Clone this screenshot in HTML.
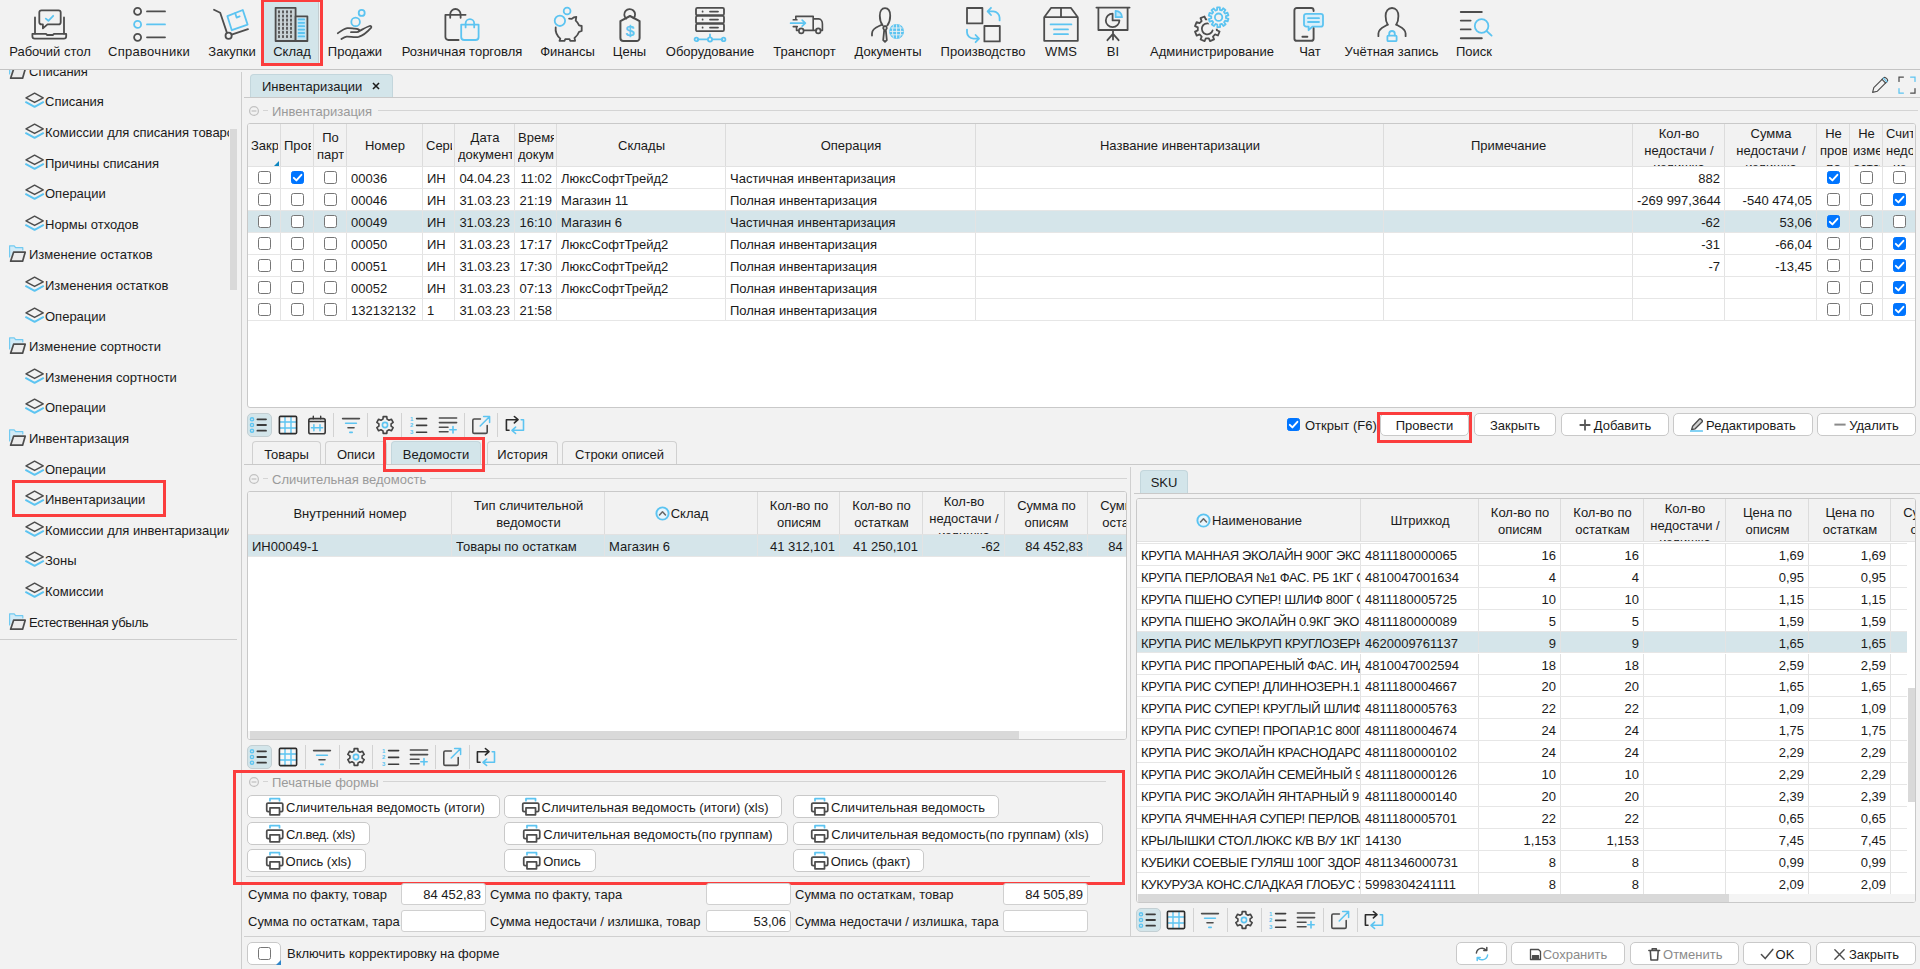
<!DOCTYPE html>
<html lang="ru"><head><meta charset="utf-8"><title>Инвентаризации</title>
<style>
*{box-sizing:border-box;margin:0;padding:0}
html,body{width:1920px;height:969px;overflow:hidden;background:#f2f2f2}
body{font-family:"Liberation Sans",sans-serif;font-size:13px;color:#1a1a1a;position:relative}
.abs{position:absolute}
.hl{position:absolute;height:1px;background:#cdcdcd}
.vl{position:absolute;width:1px;background:#cdcdcd}
#top{position:absolute;left:0;top:0;width:1920px;height:70px;border-bottom:1px solid #c4c4c4}
.ti{position:absolute;top:0;height:66px;text-align:center;white-space:nowrap}
.ti svg{position:absolute;top:6px;left:50%;margin-left:-18px;width:36px;height:36px;overflow:visible}
.ti span{position:absolute;top:44px;left:-60px;right:-60px;line-height:16px;text-align:center}
.red{position:absolute;border:3px solid #fb3d3d;pointer-events:none}
#side{position:absolute;left:0;top:70px;width:241px;height:899px;overflow:hidden}
.tr{position:absolute;left:0;height:30px;line-height:30px;white-space:nowrap;overflow:hidden;width:229px}
.tr svg{position:absolute;top:5px;width:19px;height:18px;overflow:visible}
.tr.l1 svg{left:8px}.tr.l1 span{position:absolute;left:29px}
.tr.l2 svg{left:25px}.tr.l2 span{position:absolute;left:45px}
.grid{position:absolute;border:1px solid #c9c9c9;border-radius:3px;background:#fff;overflow:hidden}
.gh{position:absolute;left:0;top:0;right:0;background:#f2f2f2;border-bottom:1px solid #e2e2e2}
.hc{position:absolute;top:0;bottom:0;border-right:1px solid #dcdcdc;overflow:hidden;text-align:center;line-height:17px;white-space:nowrap}
.hc div{position:absolute;left:3px;right:2px;overflow:hidden}
.row{position:absolute;left:0;right:0;height:22px;border-bottom:1px solid #e6e6e6}
.row.sel{background:#d5e5ea}
.c{position:absolute;top:0;height:21px;line-height:23px;border-right:1px solid #e3e3e3;overflow:hidden;white-space:nowrap;padding:0 0 0 4px}
.c i{display:block;font-style:normal;overflow:hidden;white-space:nowrap;height:21px}
.c.r{text-align:right}
.c.r i{padding-right:4px}
.cb{position:absolute;width:13px;height:13px;border:1px solid #767676;border-radius:2.5px;background:#fff}
.cb.on{background:#0075ff;border-color:#0075ff}
.cb.on svg{position:absolute;left:-1px;top:-1px;width:13px;height:13px}
.btn{position:absolute;height:23px;line-height:23px;border:1px solid #c9c9c9;border-radius:5px;background:#fff;text-align:center;white-space:nowrap;padding:0}
.btn.dis{color:#8a8a8a}
.tab{position:absolute;height:23px;line-height:23px;border:1px solid #d0d0d0;border-bottom:none;border-radius:4px 4px 0 0;text-align:center;white-space:nowrap;background:#f2f2f2}
.tab.act{background:#d3e5ea;border-color:#c3d6dc}
.cap{position:absolute;height:16px;line-height:16px;color:#9a9a9a;white-space:nowrap}
.inp{position:absolute;height:22px;line-height:22px;border:1px solid #d0d0d0;border-radius:3px;background:#fff;text-align:right;padding:0 4px}
.lbl{position:absolute;height:22px;line-height:22px;white-space:nowrap}
.tb{position:absolute;width:24px;height:24px}
.tb svg{position:absolute;left:1px;top:1px;width:22px;height:22px;overflow:visible}
.tb.act{background:#d3e5ea;border:1px solid #c3cfd3;border-radius:5px;width:25px}
.tb.act svg{left:0;top:0}
.sep{position:absolute;width:1px;height:24px;background:#d2d2d2}
.sb{position:absolute;background:#d9d9d9}
</style></head><body>
<div id="top">
<div class="abs" style="left:264px;top:2px;width:55px;height:61px;background:#d3e5ea;border-right:1px solid #c3cdd0"></div>
<div class="ti" style="left:30px;width:40px"><svg viewBox="0 0 36 36" fill="none" stroke="#4d4d4d" stroke-width="1.8" stroke-linecap="round" stroke-linejoin="round"><path d="M3 11.5V27.5M32 11.5V27.5"/>
<path d="M1.8 27.8H14l1.2 1.2h5.6l1.2-1.2h12.2v2.4a2.4 2.4 0 0 1-2.4 2.4H2.8a2.4 2.4 0 0 1-2.4-2.4v-2.4z"/>
<path d="M9.5 4.4h17a2.2 2.2 0 0 1 2.2 2.2v9.6a2.2 2.2 0 0 1-2.2 2.2H15.5l-4.6 4v-4H9.5a2.2 2.2 0 0 1-2.2-2.2V6.6A2.2 2.2 0 0 1 9.5 4.4z"/>
<path d="M13.8 12.6l2.6 2.2 4.8-5" stroke="#5cc4f1"/></svg><span>Рабочий стол</span></div>
<div class="ti" style="left:129px;width:40px"><svg viewBox="0 0 36 36" fill="none" stroke="#4d4d4d" stroke-width="1.8" stroke-linecap="round" stroke-linejoin="round"><circle cx="6.6" cy="5.4" r="3.5"/><path d="M16 5.4H34"/>
<circle cx="6.6" cy="18.4" r="3.5" stroke="#5cc4f1"/><path d="M16 18.4H34" stroke="#5cc4f1"/>
<circle cx="6.6" cy="31.3" r="3.5"/><path d="M16 31.3H34"/></svg><span><b style="font-weight:normal;letter-spacing:.3px">Справочники</b></span></div>
<div class="ti" style="left:212px;width:40px"><svg viewBox="0 0 36 36" fill="none" stroke="#4d4d4d" stroke-width="1.8" stroke-linecap="round" stroke-linejoin="round"><path d="M0 3.8l6.2 3 6.6 19.6"/><circle cx="14.6" cy="29.8" r="3.1"/><path d="M17.6 28.6L34 23.2"/>
<path d="M13.4 10.2L28.8 4l4.8 14.6-15.8 5.6z" stroke="#5cc4f1"/><path d="M21.2 7.2l1.4 4.4 3-1.2" stroke="#5cc4f1"/></svg><span>Закупки</span></div>
<div class="ti" style="left:272px;width:40px"><svg viewBox="0 0 36 36" fill="none" stroke="#4d4d4d" stroke-width="1.8" stroke-linecap="round" stroke-linejoin="round"><rect x="1.6" y="1.8" width="20" height="33.2" fill="#c9d3d6"/><rect x="21.6" y="10.4" width="11.8" height="24.6" fill="#d3e5ea"/>
<rect x="23.4" y="12" width="8" height="21.4" fill="#bfe6f7" stroke="none"/><path d="M5 5.2v1.4" /><path d="M5 9.3v1.4" /><path d="M5 13.399999999999999v1.4" /><path d="M5 17.5v1.4" /><path d="M5 21.599999999999998v1.4" /><path d="M5 25.7v1.4" /><path d="M5 29.799999999999997v1.4" /><path d="M9 5.2v1.4" /><path d="M9 9.3v1.4" /><path d="M9 13.399999999999999v1.4" /><path d="M9 17.5v1.4" /><path d="M9 21.599999999999998v1.4" /><path d="M9 25.7v1.4" /><path d="M9 29.799999999999997v1.4" /><path d="M13 5.2v1.4" /><path d="M13 9.3v1.4" /><path d="M13 13.399999999999999v1.4" /><path d="M13 17.5v1.4" /><path d="M13 21.599999999999998v1.4" /><path d="M13 25.7v1.4" /><path d="M13 29.799999999999997v1.4" /><path d="M17 5.2v1.4" /><path d="M17 9.3v1.4" /><path d="M17 13.399999999999999v1.4" /><path d="M17 17.5v1.4" /><path d="M17 21.599999999999998v1.4" /><path d="M17 25.7v1.4" /><path d="M17 29.799999999999997v1.4" /><path d="M24.6 13.4h5.6" stroke="#5cc4f1"/><path d="M24.6 16.8h5.6" stroke="#5cc4f1"/><path d="M24.6 20.2h5.6" stroke="#5cc4f1"/><path d="M24.6 23.6h5.6" stroke="#5cc4f1"/><path d="M24.6 27.0h5.6" stroke="#5cc4f1"/><path d="M24.6 30.4h5.6" stroke="#5cc4f1"/></svg><span>Склад</span></div>
<div class="ti" style="left:335px;width:40px"><svg viewBox="0 0 36 36" fill="none" stroke="#4d4d4d" stroke-width="1.8" stroke-linecap="round" stroke-linejoin="round"><circle cx="24.7" cy="6.9" r="3" stroke="#5cc4f1"/><circle cx="18.6" cy="15.9" r="4.3" stroke="#5cc4f1"/>
<path d="M0.8 27.2c3.4-2.4 6.4-4.6 9.4-5 2.6-.3 5 .2 7.6.4 1.8.1 4.4.4 4.6 1.8.2 1.6-2.4 1.8-4.2 1.8l-4.2 0"/>
<path d="M21.6 25.4c4-2 8-4.6 11-5.4 1.2-.3 2.4.6 1.4 1.8-3.4 3.8-8.2 7.8-12.4 9-3.6.8-8.4-.4-12-.2-1.8.2-3.4 1.2-5.2 2.4"/></svg><span>Продажи</span></div>
<div class="ti" style="left:442px;width:40px"><svg viewBox="0 0 36 36" fill="none" stroke="#4d4d4d" stroke-width="1.8" stroke-linecap="round" stroke-linejoin="round"><path d="M14.6 34H4.4a3 3 0 0 1-3-3V8.8h20.2"/><path d="M6.2 11.8V8.2a5.2 5.2 0 0 1 10.4 0v3.6"/>
<path d="M17.2 18.6h17.4v12.4a3 3 0 0 1-3 3H20.2a3 3 0 0 1-3-3z" stroke="#5cc4f1"/><path d="M21.6 21.4v-4a4.3 4.3 0 0 1 8.6 0v4" stroke="#5cc4f1"/></svg><span>Розничная торговля</span></div>
<div class="ti" style="left:547.5px;width:40px"><svg viewBox="0 0 36 36" fill="none" stroke="#4d4d4d" stroke-width="1.8" stroke-linecap="round" stroke-linejoin="round"><g transform="translate(-5.5 0)"><circle cx="22.6" cy="5" r="3.4" stroke="#5cc4f1"/><circle cx="15.4" cy="14.8" r="5.2" stroke="#5cc4f1"/>
<path d="M11.2 21.4c-.6 4.6 1.6 8.6 4.6 11.2l-.8 2.2h5l.8-1.6h4.2l.8 1.6h4.8l-.6-2.8c2.2-1.8 3.8-3.8 4.6-6.2l2.6-.8v-5l-2.6-.6c-.8-2-2-3.6-3.4-4.8l.6-3.8c-1.8 0-3.4.8-4.6 2-1-.2-1.6-.2-2.6-.2"/></svg><span>Финансы</span></div>
<div class="ti" style="left:609.5px;width:40px"><svg viewBox="0 0 36 36" fill="none" stroke="#4d4d4d" stroke-width="1.8" stroke-linecap="round" stroke-linejoin="round"><path d="M8.4 15.2l9.6-5.2 9.6 5.2v16.8a3 3 0 0 1-3 3H11.4a3 3 0 0 1-3-3z" stroke-width="2"/>
<path d="M14.2 12.6a5.4 5.4 0 1 1 7.4-.4" />
<text x="18" y="29.6" text-anchor="middle" font-family="Liberation Sans, sans-serif" font-size="15.5" fill="#5cc4f1" stroke="#5cc4f1" stroke-width=".5">$</text></svg><span>Цены</span></div>
<div class="ti" style="left:690px;width:40px"><svg viewBox="0 0 36 36" fill="none" stroke="#4d4d4d" stroke-width="1.8" stroke-linecap="round" stroke-linejoin="round"><rect x="4" y="1.8" width="28" height="7.4" rx="1.4"/><rect x="4" y="9.8" width="28" height="7.4" rx="1.4"/><rect x="4" y="17.8" width="28" height="7.4" rx="1.4"/>
<path d="M10.6 5.5v.2M10.6 13.5v.2M10.6 21.5v.2M18 5.6h8M18 13.6h8M18 21.6h8"/>
<path d="M18 28.4v2.8M5.6 33.4h9.8M20.6 33.4h9.8" stroke="#5cc4f1"/><circle cx="4.4" cy="33.4" r="1.8" stroke="#5cc4f1"/><circle cx="18" cy="33.4" r="2.1" stroke="#5cc4f1"/><circle cx="31.6" cy="33.4" r="1.8" stroke="#5cc4f1"/></svg><span>Оборудование</span></div>
<div class="ti" style="left:784.5px;width:40px"><svg viewBox="0 0 36 36" fill="none" stroke="#4d4d4d" stroke-width="1.8" stroke-linecap="round" stroke-linejoin="round"><g transform="translate(2.3 1) scale(.905 .95)"><path d="M7.2 9.8H26.4V24.6M7.2 9.8v2.6M4.4 13.4h4M4.4 20.6h4.4M8 20.8v3.8h2M16.4 24.6h13.6M26.4 12.4h6c2.6 0 4.2 2.8 4.2 5.4v6.8h-2"/>
<circle cx="13.2" cy="25.2" r="2.6"/><circle cx="32" cy="25.2" r="2.6"/>
<path d="M1.4 17h16M14.2 13.8l3.6 3.2-3.6 3.2" stroke="#5cc4f1" stroke-width="1.8"/></g></svg><span>Транспорт</span></div>
<div class="ti" style="left:868px;width:40px"><svg viewBox="0 0 36 36" fill="none" stroke="#4d4d4d" stroke-width="1.8" stroke-linecap="round" stroke-linejoin="round"><g transform="translate(-4 0)"><path d="M16.6 19.4c-2.2-3-2.8-6.4-2.8-9.6 0-4.8 2-7.6 5.2-7.6s5.2 2.8 5.2 7.6c0 3.2-.6 6.6-2.8 9.6"/>
<path d="M15.8 18.6c-2.4 1.8-9.8 2.8-9.8 8.8v2.2"/><path d="M18 20.2h2.2l.6 2-1 2 1 9.8-1.8 1.8-1.8-1.8 1-9.8-1-2z"/>
<circle cx="30.6" cy="25.4" r="6.6" fill="#5cc4f1" stroke="#5cc4f1"/><path d="M24 25.4h13.2M30.6 18.8v13.2M27.4 19.6c-1.2 3.8-1.2 7.8 0 11.6M33.8 19.6c1.2 3.8 1.2 7.8 0 11.6M25 22h11.2M25 28.8h11.2" stroke="#f2f2f2" stroke-width=".9"/></g></svg><span>Документы</span></div>
<div class="ti" style="left:963px;width:40px"><svg viewBox="0 0 36 36" fill="none" stroke="#4d4d4d" stroke-width="1.8" stroke-linecap="round" stroke-linejoin="round"><rect x="2" y="2" width="15.4" height="15.4"/><rect x="19.4" y="20" width="15.4" height="15.4"/>
<path d="M22.8 5.4h5.4a6.4 6.4 0 0 1 6.4 6.4v2.6M26 1.8l-3.4 3.6 3.4 3.6" stroke="#5cc4f1"/>
<path d="M2 23.6v2.6a6.4 6.4 0 0 0 6.4 6.4h5.4M10.6 29l3.4 3.6-3.4 3.6" stroke="#5cc4f1"/></svg><span>Производство</span></div>
<div class="ti" style="left:1041px;width:40px"><svg viewBox="0 0 36 36" fill="none" stroke="#4d4d4d" stroke-width="1.8" stroke-linecap="round" stroke-linejoin="round"><path d="M1.2 11.2L8.2 1.8h19.6l7 9.4v23.6H1.2zM1.2 11.2h33.6M18 1.8v9.4"/>
<path d="M7.6 18.4h20.8M11 23.4h14M11 28.2h14" stroke="#5cc4f1" stroke-width="1.8"/></svg><span>WMS</span></div>
<div class="ti" style="left:1093px;width:40px"><svg viewBox="0 0 36 36" fill="none" stroke="#4d4d4d" stroke-width="1.8" stroke-linecap="round" stroke-linejoin="round"><path d="M1.4 1.6h33.2M3.4 1.6v22.4h29.2V1.6M18 24v9.6M18 27.8l-5.6 6.4M18 27.8l5.6 6.4"/>
<path d="M17.6 7.6a6.8 6.8 0 1 0 6.8 6.8h-6.8z"/><path d="M20.6 4.8a6.4 6.4 0 0 1 6.4 6.4h-6.4z" stroke="#5cc4f1" fill="#bfe6f7"/></svg><span>BI</span></div>
<div class="ti" style="left:1192px;width:40px"><svg viewBox="0 0 36 36" fill="none" stroke="#4d4d4d" stroke-width="1.8" stroke-linecap="round" stroke-linejoin="round"><path d="M25.60 25.52L23.96 29.52L21.08 28.42L18.96 30.55L20.08 33.42L16.08 35.09L14.83 32.28L11.82 32.29L10.58 35.10L6.58 33.46L7.68 30.58L5.55 28.46L2.68 29.58L1.01 25.58L3.82 24.33L3.81 21.32L1.00 20.08L2.64 16.08L5.52 17.18L7.64 15.05L6.52 12.18L10.52 10.51L11.77 13.32L14.78 13.31L16.02 10.50L20.02 12.14L18.92 15.02L21.05 17.14L23.92 16.02L25.59 20.02L22.78 21.27L22.79 24.28z"/><path d="M18.6 24.4a5.5 5.5 0 1 1-3.8-6.9"/>
<circle cx="24.6" cy="11.2" r="11.6" fill="#f2f2f2" stroke="none"/>
<path d="M34.47 12.81L33.66 15.44L31.13 14.67L30.07 16.19L31.64 18.30L29.43 19.96L27.85 17.85L26.09 18.45L26.12 21.08L23.36 21.12L23.32 18.49L21.54 17.94L20.02 20.09L17.77 18.50L19.28 16.34L18.17 14.86L15.67 15.70L14.78 13.09L17.27 12.23L17.25 10.38L14.73 9.59L15.54 6.96L18.07 7.73L19.13 6.21L17.56 4.10L19.77 2.44L21.35 4.55L23.11 3.95L23.08 1.32L25.84 1.28L25.88 3.91L27.66 4.46L29.18 2.31L31.43 3.90L29.92 6.06L31.03 7.54L33.53 6.70L34.42 9.31L31.93 10.17L31.95 12.02z" stroke="#5cc4f1"/><circle cx="24.6" cy="11.2" r="3.7" stroke="#5cc4f1"/></svg><span>Администрирование</span></div>
<div class="ti" style="left:1290px;width:40px"><svg viewBox="0 0 36 36" fill="none" stroke="#4d4d4d" stroke-width="1.8" stroke-linecap="round" stroke-linejoin="round"><path d="M21.6 5V4.4a2.4 2.4 0 0 0-2.4-2.4H4.8a2.4 2.4 0 0 0-2.4 2.4v28a2.4 2.4 0 0 0 2.4 2.4h14.4a2.4 2.4 0 0 0 2.4-2.4V22M10.4 30.8h5" stroke-width="1.9"/>
<path d="M14.2 7.8h14.6a2.2 2.2 0 0 1 2.2 2.2v8.4a2.2 2.2 0 0 1-2.2 2.2H20.4l-3.8 3.6v-3.6h-2.4a2.2 2.2 0 0 1-2.2-2.2V10a2.2 2.2 0 0 1 2.2-2.2z" stroke="#5cc4f1" fill="#d9effa"/><path d="M16 12.2h11M16 16h11" stroke="#5cc4f1"/></svg><span>Чат</span></div>
<div class="ti" style="left:1371.5px;width:40px"><svg viewBox="0 0 36 36" fill="none" stroke="#4d4d4d" stroke-width="1.8" stroke-linecap="round" stroke-linejoin="round"><path d="M13.8 18.8c-1.6-2.4-2.2-5.6-2.2-8.8 0-4.6 2.4-8 6.4-8s6.4 3.4 6.4 8c0 3.2-.6 6.4-2.2 8.8"/><path d="M13.6 18.6c-3 2.2-9.2 3.4-9.2 9v2.6M22.4 18.6c3 2.2 9.2 3.4 9.2 9v2.6"/>
<rect x="13.4" y="29.6" width="9.2" height="5.6" rx="1" stroke="#5cc4f1" stroke-width="1.8"/><path d="M15.2 29.4v-1.6a2.8 2.8 0 0 1 5.6 0v1.6" stroke="#5cc4f1" stroke-width="1.8"/></svg><span>Учётная запись</span></div>
<div class="ti" style="left:1454px;width:40px"><svg viewBox="0 0 36 36" fill="none" stroke="#4d4d4d" stroke-width="1.8" stroke-linecap="round" stroke-linejoin="round"><path d="M4.8 6h21M4.8 14.6h9.8M4.8 23.4h9.8M4.8 32.2h21" stroke-width="1.9"/>
<circle cx="25.6" cy="20" r="6.8" stroke="#5cc4f1" stroke-width="1.8"/><path d="M30.6 25l5 4.6" stroke="#5cc4f1" stroke-width="1.8"/></svg><span>Поиск</span></div>
<div class="red" style="left:261px;top:-1px;width:62px;height:67px"></div>
</div>
<div id="side">
<div class="tr l1" style="top:-13px"><svg viewBox="0 0 19 18" fill="none" stroke="#4d4d4d" stroke-width="1.4" stroke-linejoin="round" stroke-linecap="round"><path d="M1.6 12V.8h4.6l1.4 1.9h7.2v2.2" stroke="#5cc4f1" fill="#cdeaf8" stroke-width="1.2" opacity=".85"/><path d="M5.6 7.2h11.6l-2.6 9H2.6z" fill="#ececec" stroke-width="1.7"/></svg><span>Списания</span></div>
<div class="tr l2" style="top:17px"><svg viewBox="0 0 19 18" fill="none" stroke="#4d4d4d" stroke-width="1.4" stroke-linejoin="round" stroke-linecap="round"><path d="M1 10.2l8.6 4.6 8.6-4.6" stroke="#5cc4f1" stroke-width="2"/><path d="M9.6 1.2l8.6 4.6-8.6 4.6L1 5.8z" fill="#f2f2f2" stroke-width="1.5"/></svg><span>Списания</span></div>
<div class="tr l2" style="top:48px"><svg viewBox="0 0 19 18" fill="none" stroke="#4d4d4d" stroke-width="1.4" stroke-linejoin="round" stroke-linecap="round"><path d="M1 10.2l8.6 4.6 8.6-4.6" stroke="#5cc4f1" stroke-width="2"/><path d="M9.6 1.2l8.6 4.6-8.6 4.6L1 5.8z" fill="#f2f2f2" stroke-width="1.5"/></svg><span>Комиссии для списания товаров</span></div>
<div class="tr l2" style="top:79px"><svg viewBox="0 0 19 18" fill="none" stroke="#4d4d4d" stroke-width="1.4" stroke-linejoin="round" stroke-linecap="round"><path d="M1 10.2l8.6 4.6 8.6-4.6" stroke="#5cc4f1" stroke-width="2"/><path d="M9.6 1.2l8.6 4.6-8.6 4.6L1 5.8z" fill="#f2f2f2" stroke-width="1.5"/></svg><span>Причины списания</span></div>
<div class="tr l2" style="top:109px"><svg viewBox="0 0 19 18" fill="none" stroke="#4d4d4d" stroke-width="1.4" stroke-linejoin="round" stroke-linecap="round"><path d="M1 10.2l8.6 4.6 8.6-4.6" stroke="#5cc4f1" stroke-width="2"/><path d="M9.6 1.2l8.6 4.6-8.6 4.6L1 5.8z" fill="#f2f2f2" stroke-width="1.5"/></svg><span>Операции</span></div>
<div class="tr l2" style="top:140px"><svg viewBox="0 0 19 18" fill="none" stroke="#4d4d4d" stroke-width="1.4" stroke-linejoin="round" stroke-linecap="round"><path d="M1 10.2l8.6 4.6 8.6-4.6" stroke="#5cc4f1" stroke-width="2"/><path d="M9.6 1.2l8.6 4.6-8.6 4.6L1 5.8z" fill="#f2f2f2" stroke-width="1.5"/></svg><span>Нормы отходов</span></div>
<div class="tr l1" style="top:170px"><svg viewBox="0 0 19 18" fill="none" stroke="#4d4d4d" stroke-width="1.4" stroke-linejoin="round" stroke-linecap="round"><path d="M1.6 12V.8h4.6l1.4 1.9h7.2v2.2" stroke="#5cc4f1" fill="#cdeaf8" stroke-width="1.2" opacity=".85"/><path d="M5.6 7.2h11.6l-2.6 9H2.6z" fill="#ececec" stroke-width="1.7"/></svg><span>Изменение остатков</span></div>
<div class="tr l2" style="top:201px"><svg viewBox="0 0 19 18" fill="none" stroke="#4d4d4d" stroke-width="1.4" stroke-linejoin="round" stroke-linecap="round"><path d="M1 10.2l8.6 4.6 8.6-4.6" stroke="#5cc4f1" stroke-width="2"/><path d="M9.6 1.2l8.6 4.6-8.6 4.6L1 5.8z" fill="#f2f2f2" stroke-width="1.5"/></svg><span>Изменения остатков</span></div>
<div class="tr l2" style="top:232px"><svg viewBox="0 0 19 18" fill="none" stroke="#4d4d4d" stroke-width="1.4" stroke-linejoin="round" stroke-linecap="round"><path d="M1 10.2l8.6 4.6 8.6-4.6" stroke="#5cc4f1" stroke-width="2"/><path d="M9.6 1.2l8.6 4.6-8.6 4.6L1 5.8z" fill="#f2f2f2" stroke-width="1.5"/></svg><span>Операции</span></div>
<div class="tr l1" style="top:262px"><svg viewBox="0 0 19 18" fill="none" stroke="#4d4d4d" stroke-width="1.4" stroke-linejoin="round" stroke-linecap="round"><path d="M1.6 12V.8h4.6l1.4 1.9h7.2v2.2" stroke="#5cc4f1" fill="#cdeaf8" stroke-width="1.2" opacity=".85"/><path d="M5.6 7.2h11.6l-2.6 9H2.6z" fill="#ececec" stroke-width="1.7"/></svg><span>Изменение сортности</span></div>
<div class="tr l2" style="top:293px"><svg viewBox="0 0 19 18" fill="none" stroke="#4d4d4d" stroke-width="1.4" stroke-linejoin="round" stroke-linecap="round"><path d="M1 10.2l8.6 4.6 8.6-4.6" stroke="#5cc4f1" stroke-width="2"/><path d="M9.6 1.2l8.6 4.6-8.6 4.6L1 5.8z" fill="#f2f2f2" stroke-width="1.5"/></svg><span>Изменения сортности</span></div>
<div class="tr l2" style="top:323px"><svg viewBox="0 0 19 18" fill="none" stroke="#4d4d4d" stroke-width="1.4" stroke-linejoin="round" stroke-linecap="round"><path d="M1 10.2l8.6 4.6 8.6-4.6" stroke="#5cc4f1" stroke-width="2"/><path d="M9.6 1.2l8.6 4.6-8.6 4.6L1 5.8z" fill="#f2f2f2" stroke-width="1.5"/></svg><span>Операции</span></div>
<div class="tr l1" style="top:354px"><svg viewBox="0 0 19 18" fill="none" stroke="#4d4d4d" stroke-width="1.4" stroke-linejoin="round" stroke-linecap="round"><path d="M1.6 12V.8h4.6l1.4 1.9h7.2v2.2" stroke="#5cc4f1" fill="#cdeaf8" stroke-width="1.2" opacity=".85"/><path d="M5.6 7.2h11.6l-2.6 9H2.6z" fill="#ececec" stroke-width="1.7"/></svg><span>Инвентаризация</span></div>
<div class="tr l2" style="top:385px"><svg viewBox="0 0 19 18" fill="none" stroke="#4d4d4d" stroke-width="1.4" stroke-linejoin="round" stroke-linecap="round"><path d="M1 10.2l8.6 4.6 8.6-4.6" stroke="#5cc4f1" stroke-width="2"/><path d="M9.6 1.2l8.6 4.6-8.6 4.6L1 5.8z" fill="#f2f2f2" stroke-width="1.5"/></svg><span>Операции</span></div>
<div class="tr l2" style="top:415px"><svg viewBox="0 0 19 18" fill="none" stroke="#4d4d4d" stroke-width="1.4" stroke-linejoin="round" stroke-linecap="round"><path d="M1 10.2l8.6 4.6 8.6-4.6" stroke="#5cc4f1" stroke-width="2"/><path d="M9.6 1.2l8.6 4.6-8.6 4.6L1 5.8z" fill="#f2f2f2" stroke-width="1.5"/></svg><span>Инвентаризации</span></div>
<div class="tr l2" style="top:446px"><svg viewBox="0 0 19 18" fill="none" stroke="#4d4d4d" stroke-width="1.4" stroke-linejoin="round" stroke-linecap="round"><path d="M1 10.2l8.6 4.6 8.6-4.6" stroke="#5cc4f1" stroke-width="2"/><path d="M9.6 1.2l8.6 4.6-8.6 4.6L1 5.8z" fill="#f2f2f2" stroke-width="1.5"/></svg><span>Комиссии для инвентаризации</span></div>
<div class="tr l2" style="top:476px"><svg viewBox="0 0 19 18" fill="none" stroke="#4d4d4d" stroke-width="1.4" stroke-linejoin="round" stroke-linecap="round"><path d="M1 10.2l8.6 4.6 8.6-4.6" stroke="#5cc4f1" stroke-width="2"/><path d="M9.6 1.2l8.6 4.6-8.6 4.6L1 5.8z" fill="#f2f2f2" stroke-width="1.5"/></svg><span>Зоны</span></div>
<div class="tr l2" style="top:507px"><svg viewBox="0 0 19 18" fill="none" stroke="#4d4d4d" stroke-width="1.4" stroke-linejoin="round" stroke-linecap="round"><path d="M1 10.2l8.6 4.6 8.6-4.6" stroke="#5cc4f1" stroke-width="2"/><path d="M9.6 1.2l8.6 4.6-8.6 4.6L1 5.8z" fill="#f2f2f2" stroke-width="1.5"/></svg><span>Комиссии</span></div>
<div class="tr l1" style="top:538px"><svg viewBox="0 0 19 18" fill="none" stroke="#4d4d4d" stroke-width="1.4" stroke-linejoin="round" stroke-linecap="round"><path d="M1.6 12V.8h4.6l1.4 1.9h7.2v2.2" stroke="#5cc4f1" fill="#cdeaf8" stroke-width="1.2" opacity=".85"/><path d="M5.6 7.2h11.6l-2.6 9H2.6z" fill="#ececec" stroke-width="1.7"/></svg><span><b style="font-weight:normal;letter-spacing:-.3px">Естественная убыль</b></span></div>
<div class="sb" style="left:229.5px;top:59px;width:7px;height:161px"></div>
<div class="hl" style="left:0;top:569px;width:237px"></div>
<div class="red" style="left:12px;top:410px;width:154px;height:37px"></div>
</div>
<div class="vl" style="left:241px;top:72px;height:897px"></div>
<div class="tab act" style="left:250px;top:74px;width:143px;height:24px;line-height:23px;text-align:left;padding-left:11px">Инвентаризации<svg class="abs" viewBox="0 0 10 10" style="left:121px;top:7px;width:8px;height:8px" stroke="#1a1a1a" stroke-width="1.9" stroke-linecap="butt"><path d="M1.2 1.2l7.6 7.6M8.8 1.2l-7.6 7.6"/></svg></div>
<div class="hl" style="left:244px;top:97px;width:1676px;background:#c9c9c9"></div>
<svg class="abs" viewBox="0 0 20 20" style="left:1870px;top:75px;width:20px;height:20px" fill="none" stroke="#4d4d4d" stroke-width="1.15" stroke-linejoin="round" stroke-linecap="round"><path d="M2.6 17.4l1.2-4.8L13.6 2.8a1.6 1.6 0 0 1 2.2 0l1.4 1.4a1.6 1.6 0 0 1 0 2.2L7.4 16.2z"/><path d="M12 4.4l3.6 3.6" /><path d="M13.4 3.2l3.6 3.6" stroke="#5cc4f1"/></svg>
<svg class="abs" viewBox="0 0 20 20" style="left:1897px;top:75px;width:20px;height:20px" fill="none" stroke-width="1.25" stroke-linecap="round"><path d="M2 6.4V2h4.4M18 13.6V18h-4.4" stroke="#4d4d4d"/><path d="M13.6 2H18v4.4M6.4 18H2v-4.4" stroke="#5cc4f1"/></svg>
<div class="cap" style="left:248px;top:103px;width:1670px"><svg class="abs" viewBox="0 0 12 12" style="left:0;top:2px;width:12px;height:12px" fill="none" stroke="#c2c2c2" stroke-width="1.3"><circle cx="6" cy="6" r="4.4"/><path d="M3.6 6h4.8"/></svg><div class="abs" style="left:15px;top:7px;width:5px;height:1px;background:#d4d4d4"></div><span class="abs" style="left:24px;top:1px">Инвентаризация</span><div class="abs" style="left:130px;top:7px;right:0;height:1px;background:#d4d4d4"></div></div>
<div class="grid" style="left:247px;top:123px;width:1669px;height:285px">
<div class="gh" style="height:43px">
<div class="hc" style="left:0px;width:33px"><div style="top:12.5px;height:17px">Закрыт</div></div>
<div class="hc" style="left:33px;width:33px"><div style="top:12.5px;height:17px">Проведён</div></div>
<div class="hc" style="left:66px;width:33px"><div style="top:5.0px;height:17px">По</div><div style="top:22.0px;height:17px">партиям</div></div>
<div class="hc" style="left:99px;width:76px"><div style="top:12.5px;height:17px">Номер</div></div>
<div class="hc" style="left:175px;width:32px"><div style="top:12.5px;height:17px">Серия</div></div>
<div class="hc" style="left:207px;width:60px"><div style="top:5.0px;height:17px">Дата</div><div style="top:22.0px;height:17px">документа</div></div>
<div class="hc" style="left:267px;width:42px"><div style="top:5.0px;height:17px">Время</div><div style="top:22.0px;height:17px">документа</div></div>
<div class="hc" style="left:309px;width:169px"><div style="top:12.5px;height:17px">Склады</div></div>
<div class="hc" style="left:478px;width:250px"><div style="top:12.5px;height:17px">Операция</div></div>
<div class="hc" style="left:728px;width:408px"><div style="top:12.5px;height:17px">Название инвентаризации</div></div>
<div class="hc" style="left:1136px;width:249px"><div style="top:12.5px;height:17px">Примечание</div></div>
<div class="hc" style="left:1385px;width:92px"><div style="top:1px;height:17px">Кол-во</div><div style="top:18px;height:17px">недостачи /</div><div style="top:35px;height:17px">излишка</div></div>
<div class="hc" style="left:1477px;width:92px"><div style="top:1px;height:17px">Сумма</div><div style="top:18px;height:17px">недостачи /</div><div style="top:35px;height:17px">излишка</div></div>
<div class="hc" style="left:1569px;width:33px"><div style="top:1px;height:17px">Не</div><div style="top:18px;height:17px">проводить</div><div style="top:35px;height:17px">по</div></div>
<div class="hc" style="left:1602px;width:33px"><div style="top:1px;height:17px">Не</div><div style="top:18px;height:17px">изменять</div><div style="top:35px;height:17px">остатки</div></div>
<div class="hc" style="left:1635px;width:33px"><div style="top:1px;height:17px">Считать</div><div style="top:18px;height:17px">недостачу</div><div style="top:35px;height:17px">из</div></div>
</div>
<div class="row" style="top:43.0px;height:21.94px">
<div class="c" style="left:0px;width:33px;padding:0"><div class="cb" style="left:9.5px;top:4px"></div></div>
<div class="c" style="left:33px;width:33px;padding:0"><div class="cb on" style="left:9.5px;top:4px"><svg viewBox="0 0 13 13"><path d="M2.8 6.8l2.6 2.6 5-5.6" fill="none" stroke="#fff" stroke-width="1.9" stroke-linecap="round" stroke-linejoin="round"/></svg></div></div>
<div class="c" style="left:66px;width:33px;padding:0"><div class="cb" style="left:9.5px;top:4px"></div></div>
<div class="c" style="left:99px;width:76px"><i>00036</i></div>
<div class="c" style="left:175px;width:32px"><i>ИН</i></div>
<div class="c r" style="left:207px;width:60px"><i>04.04.23</i></div>
<div class="c r" style="left:267px;width:42px"><i>11:02</i></div>
<div class="c" style="left:309px;width:169px"><i>ЛюксСофтТрейд2</i></div>
<div class="c" style="left:478px;width:250px"><i>Частичная инвентаризация</i></div>
<div class="c" style="left:728px;width:408px"><i></i></div>
<div class="c" style="left:1136px;width:249px"><i></i></div>
<div class="c r" style="left:1385px;width:92px"><i>882</i></div>
<div class="c r" style="left:1477px;width:92px"><i></i></div>
<div class="c" style="left:1569px;width:33px;padding:0"><div class="cb on" style="left:9.5px;top:4px"><svg viewBox="0 0 13 13"><path d="M2.8 6.8l2.6 2.6 5-5.6" fill="none" stroke="#fff" stroke-width="1.9" stroke-linecap="round" stroke-linejoin="round"/></svg></div></div>
<div class="c" style="left:1602px;width:33px;padding:0"><div class="cb" style="left:9.5px;top:4px"></div></div>
<div class="c" style="left:1635px;width:33px;padding:0"><div class="cb" style="left:9.5px;top:4px"></div></div>
</div>
<div class="row" style="top:64.94px;height:21.94px">
<div class="c" style="left:0px;width:33px;padding:0"><div class="cb" style="left:9.5px;top:4px"></div></div>
<div class="c" style="left:33px;width:33px;padding:0"><div class="cb" style="left:9.5px;top:4px"></div></div>
<div class="c" style="left:66px;width:33px;padding:0"><div class="cb" style="left:9.5px;top:4px"></div></div>
<div class="c" style="left:99px;width:76px"><i>00046</i></div>
<div class="c" style="left:175px;width:32px"><i>ИН</i></div>
<div class="c r" style="left:207px;width:60px"><i>31.03.23</i></div>
<div class="c r" style="left:267px;width:42px"><i>21:19</i></div>
<div class="c" style="left:309px;width:169px"><i>Магазин 11</i></div>
<div class="c" style="left:478px;width:250px"><i>Полная инвентаризация</i></div>
<div class="c" style="left:728px;width:408px"><i></i></div>
<div class="c" style="left:1136px;width:249px"><i></i></div>
<div class="c r" style="left:1385px;width:92px"><i>-269 997,3644</i></div>
<div class="c r" style="left:1477px;width:92px"><i>-540 474,05</i></div>
<div class="c" style="left:1569px;width:33px;padding:0"><div class="cb" style="left:9.5px;top:4px"></div></div>
<div class="c" style="left:1602px;width:33px;padding:0"><div class="cb" style="left:9.5px;top:4px"></div></div>
<div class="c" style="left:1635px;width:33px;padding:0"><div class="cb on" style="left:9.5px;top:4px"><svg viewBox="0 0 13 13"><path d="M2.8 6.8l2.6 2.6 5-5.6" fill="none" stroke="#fff" stroke-width="1.9" stroke-linecap="round" stroke-linejoin="round"/></svg></div></div>
</div>
<div class="row sel" style="top:86.88px;height:21.94px">
<div class="c" style="left:0px;width:33px;padding:0"><div class="cb" style="left:9.5px;top:4px"></div></div>
<div class="c" style="left:33px;width:33px;padding:0"><div class="cb" style="left:9.5px;top:4px"></div></div>
<div class="c" style="left:66px;width:33px;padding:0"><div class="cb" style="left:9.5px;top:4px"></div></div>
<div class="c" style="left:99px;width:76px"><i>00049</i></div>
<div class="c" style="left:175px;width:32px"><i>ИН</i></div>
<div class="c r" style="left:207px;width:60px"><i>31.03.23</i></div>
<div class="c r" style="left:267px;width:42px"><i>16:10</i></div>
<div class="c" style="left:309px;width:169px"><i>Магазин 6</i></div>
<div class="c" style="left:478px;width:250px"><i>Частичная инвентаризация</i></div>
<div class="c" style="left:728px;width:408px"><i></i></div>
<div class="c" style="left:1136px;width:249px"><i></i></div>
<div class="c r" style="left:1385px;width:92px"><i>-62</i></div>
<div class="c r" style="left:1477px;width:92px"><i>53,06</i></div>
<div class="c" style="left:1569px;width:33px;padding:0"><div class="cb on" style="left:9.5px;top:4px"><svg viewBox="0 0 13 13"><path d="M2.8 6.8l2.6 2.6 5-5.6" fill="none" stroke="#fff" stroke-width="1.9" stroke-linecap="round" stroke-linejoin="round"/></svg></div></div>
<div class="c" style="left:1602px;width:33px;padding:0"><div class="cb" style="left:9.5px;top:4px"></div></div>
<div class="c" style="left:1635px;width:33px;padding:0"><div class="cb" style="left:9.5px;top:4px"></div></div>
</div>
<div class="row" style="top:108.82px;height:21.94px">
<div class="c" style="left:0px;width:33px;padding:0"><div class="cb" style="left:9.5px;top:4px"></div></div>
<div class="c" style="left:33px;width:33px;padding:0"><div class="cb" style="left:9.5px;top:4px"></div></div>
<div class="c" style="left:66px;width:33px;padding:0"><div class="cb" style="left:9.5px;top:4px"></div></div>
<div class="c" style="left:99px;width:76px"><i>00050</i></div>
<div class="c" style="left:175px;width:32px"><i>ИН</i></div>
<div class="c r" style="left:207px;width:60px"><i>31.03.23</i></div>
<div class="c r" style="left:267px;width:42px"><i>17:17</i></div>
<div class="c" style="left:309px;width:169px"><i>ЛюксСофтТрейд2</i></div>
<div class="c" style="left:478px;width:250px"><i>Полная инвентаризация</i></div>
<div class="c" style="left:728px;width:408px"><i></i></div>
<div class="c" style="left:1136px;width:249px"><i></i></div>
<div class="c r" style="left:1385px;width:92px"><i>-31</i></div>
<div class="c r" style="left:1477px;width:92px"><i>-66,04</i></div>
<div class="c" style="left:1569px;width:33px;padding:0"><div class="cb" style="left:9.5px;top:4px"></div></div>
<div class="c" style="left:1602px;width:33px;padding:0"><div class="cb" style="left:9.5px;top:4px"></div></div>
<div class="c" style="left:1635px;width:33px;padding:0"><div class="cb on" style="left:9.5px;top:4px"><svg viewBox="0 0 13 13"><path d="M2.8 6.8l2.6 2.6 5-5.6" fill="none" stroke="#fff" stroke-width="1.9" stroke-linecap="round" stroke-linejoin="round"/></svg></div></div>
</div>
<div class="row" style="top:130.76px;height:21.94px">
<div class="c" style="left:0px;width:33px;padding:0"><div class="cb" style="left:9.5px;top:4px"></div></div>
<div class="c" style="left:33px;width:33px;padding:0"><div class="cb" style="left:9.5px;top:4px"></div></div>
<div class="c" style="left:66px;width:33px;padding:0"><div class="cb" style="left:9.5px;top:4px"></div></div>
<div class="c" style="left:99px;width:76px"><i>00051</i></div>
<div class="c" style="left:175px;width:32px"><i>ИН</i></div>
<div class="c r" style="left:207px;width:60px"><i>31.03.23</i></div>
<div class="c r" style="left:267px;width:42px"><i>17:30</i></div>
<div class="c" style="left:309px;width:169px"><i>ЛюксСофтТрейд2</i></div>
<div class="c" style="left:478px;width:250px"><i>Полная инвентаризация</i></div>
<div class="c" style="left:728px;width:408px"><i></i></div>
<div class="c" style="left:1136px;width:249px"><i></i></div>
<div class="c r" style="left:1385px;width:92px"><i>-7</i></div>
<div class="c r" style="left:1477px;width:92px"><i>-13,45</i></div>
<div class="c" style="left:1569px;width:33px;padding:0"><div class="cb" style="left:9.5px;top:4px"></div></div>
<div class="c" style="left:1602px;width:33px;padding:0"><div class="cb" style="left:9.5px;top:4px"></div></div>
<div class="c" style="left:1635px;width:33px;padding:0"><div class="cb on" style="left:9.5px;top:4px"><svg viewBox="0 0 13 13"><path d="M2.8 6.8l2.6 2.6 5-5.6" fill="none" stroke="#fff" stroke-width="1.9" stroke-linecap="round" stroke-linejoin="round"/></svg></div></div>
</div>
<div class="row" style="top:152.7px;height:21.94px">
<div class="c" style="left:0px;width:33px;padding:0"><div class="cb" style="left:9.5px;top:4px"></div></div>
<div class="c" style="left:33px;width:33px;padding:0"><div class="cb" style="left:9.5px;top:4px"></div></div>
<div class="c" style="left:66px;width:33px;padding:0"><div class="cb" style="left:9.5px;top:4px"></div></div>
<div class="c" style="left:99px;width:76px"><i>00052</i></div>
<div class="c" style="left:175px;width:32px"><i>ИН</i></div>
<div class="c r" style="left:207px;width:60px"><i>31.03.23</i></div>
<div class="c r" style="left:267px;width:42px"><i>07:13</i></div>
<div class="c" style="left:309px;width:169px"><i>ЛюксСофтТрейд2</i></div>
<div class="c" style="left:478px;width:250px"><i>Полная инвентаризация</i></div>
<div class="c" style="left:728px;width:408px"><i></i></div>
<div class="c" style="left:1136px;width:249px"><i></i></div>
<div class="c r" style="left:1385px;width:92px"><i></i></div>
<div class="c r" style="left:1477px;width:92px"><i></i></div>
<div class="c" style="left:1569px;width:33px;padding:0"><div class="cb" style="left:9.5px;top:4px"></div></div>
<div class="c" style="left:1602px;width:33px;padding:0"><div class="cb" style="left:9.5px;top:4px"></div></div>
<div class="c" style="left:1635px;width:33px;padding:0"><div class="cb on" style="left:9.5px;top:4px"><svg viewBox="0 0 13 13"><path d="M2.8 6.8l2.6 2.6 5-5.6" fill="none" stroke="#fff" stroke-width="1.9" stroke-linecap="round" stroke-linejoin="round"/></svg></div></div>
</div>
<div class="row" style="top:174.64px;height:21.94px">
<div class="c" style="left:0px;width:33px;padding:0"><div class="cb" style="left:9.5px;top:4px"></div></div>
<div class="c" style="left:33px;width:33px;padding:0"><div class="cb" style="left:9.5px;top:4px"></div></div>
<div class="c" style="left:66px;width:33px;padding:0"><div class="cb" style="left:9.5px;top:4px"></div></div>
<div class="c" style="left:99px;width:76px"><i>132132132</i></div>
<div class="c" style="left:175px;width:32px"><i>1</i></div>
<div class="c r" style="left:207px;width:60px"><i>31.03.23</i></div>
<div class="c r" style="left:267px;width:42px"><i>21:58</i></div>
<div class="c" style="left:309px;width:169px"><i></i></div>
<div class="c" style="left:478px;width:250px"><i>Полная инвентаризация</i></div>
<div class="c" style="left:728px;width:408px"><i></i></div>
<div class="c" style="left:1136px;width:249px"><i></i></div>
<div class="c r" style="left:1385px;width:92px"><i></i></div>
<div class="c r" style="left:1477px;width:92px"><i></i></div>
<div class="c" style="left:1569px;width:33px;padding:0"><div class="cb" style="left:9.5px;top:4px"></div></div>
<div class="c" style="left:1602px;width:33px;padding:0"><div class="cb" style="left:9.5px;top:4px"></div></div>
<div class="c" style="left:1635px;width:33px;padding:0"><div class="cb on" style="left:9.5px;top:4px"><svg viewBox="0 0 13 13"><path d="M2.8 6.8l2.6 2.6 5-5.6" fill="none" stroke="#fff" stroke-width="1.9" stroke-linecap="round" stroke-linejoin="round"/></svg></div></div>
</div>
<svg class="abs" viewBox="0 0 6 6" style="left:26px;top:37px;width:5px;height:5px"><path d="M6 0v6H0z" fill="#0d86c0"/></svg>
</div>
<div class="tb act" style="left:247px;top:413px"><svg viewBox="0 0 22 22" fill="none" stroke="#4d4d4d" stroke-width="1.4" stroke-linecap="round" stroke-linejoin="round"><circle cx="4" cy="5.3" r="1.6" stroke="#5cc4f1"/><circle cx="4" cy="11" r="1.6" stroke="#5cc4f1"/><circle cx="4" cy="16.7" r="1.6" stroke="#5cc4f1"/><path d="M9.4 5.3h8.6M9.4 11h8.6M9.4 16.7h8.6" stroke-width="1.8" stroke="#3c3c3c"/></svg></div>
<div class="tb" style="left:276px;top:413px"><svg viewBox="0 0 22 22" fill="none" stroke="#4d4d4d" stroke-width="1.4" stroke-linecap="round" stroke-linejoin="round"><rect x="2.4" y="2.4" width="17.2" height="17.2" fill="#f7f7f7" stroke="none"/><path d="M8 2.6v17M14 2.6v17M2.6 8h17M2.6 14h17" stroke="#5cc4f1"/><rect x="2.4" y="2.4" width="17.2" height="17.2" rx="1" stroke-width="1.6" stroke="#2c2c2c"/></svg></div>
<div class="tb" style="left:304.5px;top:413px"><svg viewBox="0 0 22 22" fill="none" stroke="#4d4d4d" stroke-width="1.4" stroke-linecap="round" stroke-linejoin="round"><rect x="2.8" y="4.6" width="16.4" height="15.2" rx="1.8" stroke-width="1.6" stroke="#3a3a3a"/><path d="M2.8 7.5h16.4M7.3 2.2v2.6M14.7 2.2v2.6" stroke="#3a3a3a"/><path d="M5.4 13.7h11.2M7.9 10.7v6M14 10.7v6" stroke="#5cc4f1" stroke-width="1.5"/></svg></div>
<div class="tb" style="left:338.5px;top:413px"><svg viewBox="0 0 22 22" fill="none" stroke="#4d4d4d" stroke-width="1.4" stroke-linecap="round" stroke-linejoin="round"><path d="M2.6 4.6h16.8" stroke-width="1.6"/><path d="M5.6 9.2h10.8" stroke="#5cc4f1" stroke-width="1.6"/><path d="M8 13.8h6" stroke-width="1.6"/><path d="M9.8 18.4h2.4" stroke="#5cc4f1" stroke-width="1.6"/></svg></div>
<div class="tb" style="left:372.5px;top:413px"><svg viewBox="0 0 22 22" fill="none" stroke="#4d4d4d" stroke-width="1.4" stroke-linecap="round" stroke-linejoin="round"><path d="M9.21 2.59L12.79 2.59L13.04 5.14L15.05 6.31L17.39 5.25L19.18 8.34L17.09 9.84L17.09 12.16L19.18 13.66L17.39 16.75L15.05 15.69L13.04 16.86L12.79 19.41L9.21 19.41L8.96 16.86L6.95 15.69L4.61 16.75L2.82 13.66L4.91 12.16L4.91 9.84L2.82 8.34L4.61 5.25L6.95 6.31L8.96 5.14z" stroke-width="1.6" stroke="#444"/><circle cx="11" cy="11" r="2.6" stroke="#5cc4f1" stroke-width="1.6"/></svg></div>
<div class="tb" style="left:406.5px;top:413px"><svg viewBox="0 0 22 22" fill="none" stroke="#4d4d4d" stroke-width="1.4" stroke-linecap="round" stroke-linejoin="round"><g font-family="Liberation Sans, sans-serif" font-size="6" font-weight="bold" fill="#5cc4f1" stroke="none" text-anchor="middle"><text x="3.6" y="6.6">1</text><text x="3.6" y="13.2">2</text><text x="3.6" y="19.8">3</text></g><path d="M8.6 4.6h10M8.6 11.4h10M8.6 18.2h10" stroke-width="1.6" stroke="#3c3c3c"/></svg></div>
<div class="tb" style="left:435.5px;top:413px"><svg viewBox="0 0 22 22" fill="none" stroke="#4d4d4d" stroke-width="1.4" stroke-linecap="round" stroke-linejoin="round"><path d="M2.4 4h17.2M2.4 8.6h17.2M2.4 13.2h8.6M2.4 17.8h8.6" stroke-width="1.6"/><path d="M16 12.6v6.4M12.8 15.8h6.4" stroke="#5cc4f1" stroke-width="1.6"/></svg></div>
<div class="tb" style="left:469px;top:413px"><svg viewBox="0 0 22 22" fill="none" stroke="#4d4d4d" stroke-width="1.4" stroke-linecap="round" stroke-linejoin="round"><path d="M10.4 5H4.2a1.4 1.4 0 0 0-1.4 1.4v11.6a1.4 1.4 0 0 0 1.4 1.4h11.6a1.4 1.4 0 0 0 1.4-1.4v-6.4" stroke-width="1.6"/><path d="M10.2 12L19.4 2.8M13.6 2.6h6v6" stroke="#5cc4f1" stroke-width="1.5"/></svg></div>
<div class="tb" style="left:503px;top:413px"><svg viewBox="0 0 22 22" fill="none" stroke="#4d4d4d" stroke-width="1.4" stroke-linecap="round" stroke-linejoin="round"><path d="M5 16.3H2.4V5.7H13.4M10.4 2.5l3.6 3.2-3.6 3.2" stroke="#2c2c2c" stroke-width="1.6"/><path d="M17.2 5.7h2.3v10.6H8.4M11.6 13.1l-3.6 3.2 3.6 3.2" stroke="#5cc4f1" stroke-width="1.6"/></svg></div>
<div class="sep" style="left:333px;top:413px"></div>
<div class="sep" style="left:367px;top:413px"></div>
<div class="sep" style="left:401px;top:413px"></div>
<div class="sep" style="left:464px;top:413px"></div>
<div class="sep" style="left:497px;top:413px"></div>
<div class="cb on" style="left:1287px;top:418px"><svg viewBox="0 0 13 13"><path d="M2.8 6.8l2.6 2.6 5-5.6" fill="none" stroke="#fff" stroke-width="1.9" stroke-linecap="round" stroke-linejoin="round"/></svg></div>
<div class="lbl" style="left:1305px;top:415px">Открыт (F6)</div>
<div class="btn" style="left:1380px;top:413px;width:89px">Провести</div>
<div class="btn" style="left:1474px;top:413px;width:82px">Закрыть</div>
<div class="btn" style="left:1561px;top:413px;width:108px"><svg viewBox="0 0 12 12" style="width:12px;height:12px;vertical-align:-1px;margin-right:3px" stroke="#585858" stroke-width="1.8" stroke-linecap="butt"><path d="M6 .6v10.8M.6 6h10.8"/></svg>Добавить</div>
<div class="btn" style="left:1673px;top:413px;width:140px"><svg viewBox="0 0 13 14" style="width:13px;height:14px;vertical-align:-2px;margin-right:3px" fill="none" stroke="#4a4a4a" stroke-width="1.3" stroke-linejoin="round" stroke-linecap="round"><path d="M1.6 11.6l1-3.4L9.2 1.2a1.3 1.3 0 0 1 1.8 0l1 1a1.3 1.3 0 0 1 0 1.8L5.2 10.8z" fill="#d0d0d0"/><path d="M.4 13.1h12" stroke="#5cc4f1" stroke-width="1.5"/></svg>Редактировать</div>
<div class="btn" style="left:1817px;top:413px;width:99px"><svg viewBox="0 0 12 12" style="width:12px;height:12px;vertical-align:-1px;margin-right:3px" stroke="#8a8a8a" stroke-width="2" stroke-linecap="butt"><path d="M.4 5.6h11.2"/></svg>Удалить</div>
<div class="red" style="left:1377px;top:412px;width:95px;height:31px"></div>
<div class="tab" style="left:252px;top:441px;width:69px;height:24px;line-height:25px">Товары</div>
<div class="tab" style="left:325px;top:441px;width:62px;height:24px;line-height:25px">Описи</div>
<div class="tab act" style="left:391px;top:441px;width:90px;height:24px;line-height:25px">Ведомости</div>
<div class="tab" style="left:487px;top:441px;width:71px;height:24px;line-height:25px">История</div>
<div class="tab" style="left:562px;top:441px;width:115px;height:24px;line-height:25px">Строки описей</div>
<div class="hl" style="left:244px;top:464px;width:1676px;background:#c9c9c9"></div>
<div class="red" style="left:383px;top:437px;width:102px;height:35px"></div>
<div class="cap" style="left:248px;top:471px;width:879px"><svg class="abs" viewBox="0 0 12 12" style="left:0;top:2px;width:12px;height:12px" fill="none" stroke="#c2c2c2" stroke-width="1.3"><circle cx="6" cy="6" r="4.4"/><path d="M3.6 6h4.8"/></svg><div class="abs" style="left:15px;top:7px;width:5px;height:1px;background:#d4d4d4"></div><span class="abs" style="left:24px;top:1px">Сличительная ведомость</span><div class="abs" style="left:182px;top:7px;right:0;height:1px;background:#d4d4d4"></div></div>
<div class="grid" style="left:247px;top:491px;width:880px;height:249px">
<div class="gh" style="height:43px">
<div class="hc" style="left:0px;width:204px"><div style="top:12.5px;height:17px">Внутренний номер</div></div>
<div class="hc" style="left:204px;width:153px"><div style="top:5.0px;height:17px">Тип сличительной</div><div style="top:22.0px;height:17px">ведомости</div></div>
<div class="hc" style="left:357px;width:153px"><div style="top:12.5px;height:17px"><svg viewBox="0 0 14 14" style="width:15px;height:15px;vertical-align:-3px;margin-right:1px" fill="none"><circle cx="7" cy="7" r="5.7" stroke="#5cc4f1" stroke-width="1.8" fill="#e9f6fd"/><path d="M4.2 8.4L7 5.4l2.8 3" stroke="#6a6a6a" stroke-width="1.5" stroke-linecap="round" stroke-linejoin="round"/></svg>Склад</div></div>
<div class="hc" style="left:510px;width:82px"><div style="top:5.0px;height:17px">Кол-во по</div><div style="top:22.0px;height:17px">описям</div></div>
<div class="hc" style="left:592px;width:83px"><div style="top:5.0px;height:17px">Кол-во по</div><div style="top:22.0px;height:17px">остаткам</div></div>
<div class="hc" style="left:675px;width:82px"><div style="top:1px;height:17px">Кол-во</div><div style="top:18px;height:17px">недостачи /</div><div style="top:35px;height:17px">излишка</div></div>
<div class="hc" style="left:757px;width:83px"><div style="top:5.0px;height:17px">Сумма по</div><div style="top:22.0px;height:17px">описям</div></div>
<div class="hc" style="left:840px;width:83px"><div style="top:5.0px;height:17px">Сумма по</div><div style="top:22.0px;height:17px">остаткам</div></div>
</div>
<div class="row sel" style="top:43.0px;height:21.94px">
<div class="c" style="left:0px;width:204px"><i>ИН00049-1</i></div>
<div class="c" style="left:204px;width:153px"><i>Товары по остаткам</i></div>
<div class="c" style="left:357px;width:153px"><i>Магазин 6</i></div>
<div class="c r" style="left:510px;width:82px"><i>41 312,101</i></div>
<div class="c r" style="left:592px;width:83px"><i>41 250,101</i></div>
<div class="c r" style="left:675px;width:82px"><i>-62</i></div>
<div class="c r" style="left:757px;width:83px"><i>84 452,83</i></div>
<div class="c r" style="left:840px;width:83px"><i>84 505,89</i></div>
</div>
<div class="abs" style="left:0;top:239px;width:879px;height:8px;background:#f4f4f4"></div><div class="sb" style="left:2px;top:239px;width:769px;height:8px"></div>
</div>
<div class="tb act" style="left:247px;top:745px"><svg viewBox="0 0 22 22" fill="none" stroke="#4d4d4d" stroke-width="1.4" stroke-linecap="round" stroke-linejoin="round"><circle cx="4" cy="5.3" r="1.6" stroke="#5cc4f1"/><circle cx="4" cy="11" r="1.6" stroke="#5cc4f1"/><circle cx="4" cy="16.7" r="1.6" stroke="#5cc4f1"/><path d="M9.4 5.3h8.6M9.4 11h8.6M9.4 16.7h8.6" stroke-width="1.8" stroke="#3c3c3c"/></svg></div>
<div class="tb" style="left:276px;top:745px"><svg viewBox="0 0 22 22" fill="none" stroke="#4d4d4d" stroke-width="1.4" stroke-linecap="round" stroke-linejoin="round"><rect x="2.4" y="2.4" width="17.2" height="17.2" fill="#f7f7f7" stroke="none"/><path d="M8 2.6v17M14 2.6v17M2.6 8h17M2.6 14h17" stroke="#5cc4f1"/><rect x="2.4" y="2.4" width="17.2" height="17.2" rx="1" stroke-width="1.6" stroke="#2c2c2c"/></svg></div>
<div class="tb" style="left:310px;top:745px"><svg viewBox="0 0 22 22" fill="none" stroke="#4d4d4d" stroke-width="1.4" stroke-linecap="round" stroke-linejoin="round"><path d="M2.6 4.6h16.8" stroke-width="1.6"/><path d="M5.6 9.2h10.8" stroke="#5cc4f1" stroke-width="1.6"/><path d="M8 13.8h6" stroke-width="1.6"/><path d="M9.8 18.4h2.4" stroke="#5cc4f1" stroke-width="1.6"/></svg></div>
<div class="tb" style="left:343.5px;top:745px"><svg viewBox="0 0 22 22" fill="none" stroke="#4d4d4d" stroke-width="1.4" stroke-linecap="round" stroke-linejoin="round"><path d="M9.21 2.59L12.79 2.59L13.04 5.14L15.05 6.31L17.39 5.25L19.18 8.34L17.09 9.84L17.09 12.16L19.18 13.66L17.39 16.75L15.05 15.69L13.04 16.86L12.79 19.41L9.21 19.41L8.96 16.86L6.95 15.69L4.61 16.75L2.82 13.66L4.91 12.16L4.91 9.84L2.82 8.34L4.61 5.25L6.95 6.31L8.96 5.14z" stroke-width="1.6" stroke="#444"/><circle cx="11" cy="11" r="2.6" stroke="#5cc4f1" stroke-width="1.6"/></svg></div>
<div class="tb" style="left:378.5px;top:745px"><svg viewBox="0 0 22 22" fill="none" stroke="#4d4d4d" stroke-width="1.4" stroke-linecap="round" stroke-linejoin="round"><g font-family="Liberation Sans, sans-serif" font-size="6" font-weight="bold" fill="#5cc4f1" stroke="none" text-anchor="middle"><text x="3.6" y="6.6">1</text><text x="3.6" y="13.2">2</text><text x="3.6" y="19.8">3</text></g><path d="M8.6 4.6h10M8.6 11.4h10M8.6 18.2h10" stroke-width="1.6" stroke="#3c3c3c"/></svg></div>
<div class="tb" style="left:406.5px;top:745px"><svg viewBox="0 0 22 22" fill="none" stroke="#4d4d4d" stroke-width="1.4" stroke-linecap="round" stroke-linejoin="round"><path d="M2.4 4h17.2M2.4 8.6h17.2M2.4 13.2h8.6M2.4 17.8h8.6" stroke-width="1.6"/><path d="M16 12.6v6.4M12.8 15.8h6.4" stroke="#5cc4f1" stroke-width="1.6"/></svg></div>
<div class="tb" style="left:440px;top:745px"><svg viewBox="0 0 22 22" fill="none" stroke="#4d4d4d" stroke-width="1.4" stroke-linecap="round" stroke-linejoin="round"><path d="M10.4 5H4.2a1.4 1.4 0 0 0-1.4 1.4v11.6a1.4 1.4 0 0 0 1.4 1.4h11.6a1.4 1.4 0 0 0 1.4-1.4v-6.4" stroke-width="1.6"/><path d="M10.2 12L19.4 2.8M13.6 2.6h6v6" stroke="#5cc4f1" stroke-width="1.5"/></svg></div>
<div class="tb" style="left:474px;top:745px"><svg viewBox="0 0 22 22" fill="none" stroke="#4d4d4d" stroke-width="1.4" stroke-linecap="round" stroke-linejoin="round"><path d="M5 16.3H2.4V5.7H13.4M10.4 2.5l3.6 3.2-3.6 3.2" stroke="#2c2c2c" stroke-width="1.6"/><path d="M17.2 5.7h2.3v10.6H8.4M11.6 13.1l-3.6 3.2 3.6 3.2" stroke="#5cc4f1" stroke-width="1.6"/></svg></div>
<div class="sep" style="left:305px;top:745px"></div>
<div class="sep" style="left:339px;top:745px"></div>
<div class="sep" style="left:372px;top:745px"></div>
<div class="sep" style="left:435px;top:745px"></div>
<div class="sep" style="left:469px;top:745px"></div>
<div class="cap" style="left:248px;top:774px;width:858px"><svg class="abs" viewBox="0 0 12 12" style="left:0;top:2px;width:12px;height:12px" fill="none" stroke="#c2c2c2" stroke-width="1.3"><circle cx="6" cy="6" r="4.4"/><path d="M3.6 6h4.8"/></svg><div class="abs" style="left:15px;top:7px;width:5px;height:1px;background:#d4d4d4"></div><span class="abs" style="left:24px;top:1px">Печатные формы</span><div class="abs" style="left:135px;top:7px;right:0;height:1px;background:#d4d4d4"></div></div>
<div class="btn" style="left:247px;top:795px;width:253px"><svg viewBox="0 0 18 18" style="width:19.5px;height:19.5px;vertical-align:-4px;margin-right:1.5px;margin-left:3px" fill="none" stroke="#4d4d4d" stroke-width="1.6" stroke-linejoin="round" stroke-linecap="round"><path d="M4.6 3.4V1.6h8.8v1.8" stroke="#5cc4f1"/><path d="M4.4 13.4H2.8a1.2 1.2 0 0 1-1.2-1.2V6.8a1.2 1.2 0 0 1 1.2-1.2h12.4a1.2 1.2 0 0 1 1.2 1.2v5.4a1.2 1.2 0 0 1-1.2 1.2h-1.6"/><rect x="4.6" y="10" width="8.8" height="6.4" fill="#fff"/></svg>Сличительная ведомость (итоги)</div>
<div class="btn" style="left:504px;top:795px;width:278px"><svg viewBox="0 0 18 18" style="width:19.5px;height:19.5px;vertical-align:-4px;margin-right:1.5px;margin-left:3px" fill="none" stroke="#4d4d4d" stroke-width="1.6" stroke-linejoin="round" stroke-linecap="round"><path d="M4.6 3.4V1.6h8.8v1.8" stroke="#5cc4f1"/><path d="M4.4 13.4H2.8a1.2 1.2 0 0 1-1.2-1.2V6.8a1.2 1.2 0 0 1 1.2-1.2h12.4a1.2 1.2 0 0 1 1.2 1.2v5.4a1.2 1.2 0 0 1-1.2 1.2h-1.6"/><rect x="4.6" y="10" width="8.8" height="6.4" fill="#fff"/></svg>Сличительная ведомость (итоги) (xls)</div>
<div class="btn" style="left:793px;top:795px;width:206px"><svg viewBox="0 0 18 18" style="width:19.5px;height:19.5px;vertical-align:-4px;margin-right:1.5px;margin-left:3px" fill="none" stroke="#4d4d4d" stroke-width="1.6" stroke-linejoin="round" stroke-linecap="round"><path d="M4.6 3.4V1.6h8.8v1.8" stroke="#5cc4f1"/><path d="M4.4 13.4H2.8a1.2 1.2 0 0 1-1.2-1.2V6.8a1.2 1.2 0 0 1 1.2-1.2h12.4a1.2 1.2 0 0 1 1.2 1.2v5.4a1.2 1.2 0 0 1-1.2 1.2h-1.6"/><rect x="4.6" y="10" width="8.8" height="6.4" fill="#fff"/></svg>Сличительная ведомость</div>
<div class="btn" style="left:247px;top:822px;width:123px"><svg viewBox="0 0 18 18" style="width:19.5px;height:19.5px;vertical-align:-4px;margin-right:1.5px;margin-left:3px" fill="none" stroke="#4d4d4d" stroke-width="1.6" stroke-linejoin="round" stroke-linecap="round"><path d="M4.6 3.4V1.6h8.8v1.8" stroke="#5cc4f1"/><path d="M4.4 13.4H2.8a1.2 1.2 0 0 1-1.2-1.2V6.8a1.2 1.2 0 0 1 1.2-1.2h12.4a1.2 1.2 0 0 1 1.2 1.2v5.4a1.2 1.2 0 0 1-1.2 1.2h-1.6"/><rect x="4.6" y="10" width="8.8" height="6.4" fill="#fff"/></svg><span style="letter-spacing:-.35px">Сл.вед. (xls)</span></div>
<div class="btn" style="left:504px;top:822px;width:284px"><svg viewBox="0 0 18 18" style="width:19.5px;height:19.5px;vertical-align:-4px;margin-right:1.5px;margin-left:3px" fill="none" stroke="#4d4d4d" stroke-width="1.6" stroke-linejoin="round" stroke-linecap="round"><path d="M4.6 3.4V1.6h8.8v1.8" stroke="#5cc4f1"/><path d="M4.4 13.4H2.8a1.2 1.2 0 0 1-1.2-1.2V6.8a1.2 1.2 0 0 1 1.2-1.2h12.4a1.2 1.2 0 0 1 1.2 1.2v5.4a1.2 1.2 0 0 1-1.2 1.2h-1.6"/><rect x="4.6" y="10" width="8.8" height="6.4" fill="#fff"/></svg>Сличительная ведомость(по группам)</div>
<div class="btn" style="left:793px;top:822px;width:310px"><svg viewBox="0 0 18 18" style="width:19.5px;height:19.5px;vertical-align:-4px;margin-right:1.5px;margin-left:3px" fill="none" stroke="#4d4d4d" stroke-width="1.6" stroke-linejoin="round" stroke-linecap="round"><path d="M4.6 3.4V1.6h8.8v1.8" stroke="#5cc4f1"/><path d="M4.4 13.4H2.8a1.2 1.2 0 0 1-1.2-1.2V6.8a1.2 1.2 0 0 1 1.2-1.2h12.4a1.2 1.2 0 0 1 1.2 1.2v5.4a1.2 1.2 0 0 1-1.2 1.2h-1.6"/><rect x="4.6" y="10" width="8.8" height="6.4" fill="#fff"/></svg>Сличительная ведомость(по группам) (xls)</div>
<div class="btn" style="left:247px;top:849px;width:119px"><svg viewBox="0 0 18 18" style="width:19.5px;height:19.5px;vertical-align:-4px;margin-right:1.5px;margin-left:3px" fill="none" stroke="#4d4d4d" stroke-width="1.6" stroke-linejoin="round" stroke-linecap="round"><path d="M4.6 3.4V1.6h8.8v1.8" stroke="#5cc4f1"/><path d="M4.4 13.4H2.8a1.2 1.2 0 0 1-1.2-1.2V6.8a1.2 1.2 0 0 1 1.2-1.2h12.4a1.2 1.2 0 0 1 1.2 1.2v5.4a1.2 1.2 0 0 1-1.2 1.2h-1.6"/><rect x="4.6" y="10" width="8.8" height="6.4" fill="#fff"/></svg>Опись (xls)</div>
<div class="btn" style="left:504px;top:849px;width:92px"><svg viewBox="0 0 18 18" style="width:19.5px;height:19.5px;vertical-align:-4px;margin-right:1.5px;margin-left:3px" fill="none" stroke="#4d4d4d" stroke-width="1.6" stroke-linejoin="round" stroke-linecap="round"><path d="M4.6 3.4V1.6h8.8v1.8" stroke="#5cc4f1"/><path d="M4.4 13.4H2.8a1.2 1.2 0 0 1-1.2-1.2V6.8a1.2 1.2 0 0 1 1.2-1.2h12.4a1.2 1.2 0 0 1 1.2 1.2v5.4a1.2 1.2 0 0 1-1.2 1.2h-1.6"/><rect x="4.6" y="10" width="8.8" height="6.4" fill="#fff"/></svg>Опись</div>
<div class="btn" style="left:793px;top:849px;width:131px"><svg viewBox="0 0 18 18" style="width:19.5px;height:19.5px;vertical-align:-4px;margin-right:1.5px;margin-left:3px" fill="none" stroke="#4d4d4d" stroke-width="1.6" stroke-linejoin="round" stroke-linecap="round"><path d="M4.6 3.4V1.6h8.8v1.8" stroke="#5cc4f1"/><path d="M4.4 13.4H2.8a1.2 1.2 0 0 1-1.2-1.2V6.8a1.2 1.2 0 0 1 1.2-1.2h12.4a1.2 1.2 0 0 1 1.2 1.2v5.4a1.2 1.2 0 0 1-1.2 1.2h-1.6"/><rect x="4.6" y="10" width="8.8" height="6.4" fill="#fff"/></svg>Опись (факт)</div>
<div class="hl" style="left:246px;top:876px;width:844px;background:#d4d4d4"></div>
<div class="red" style="left:233px;top:770px;width:892px;height:115px"></div>
<div class="lbl" style="left:248px;top:884px">Сумма по факту, товар</div><div class="inp" style="left:401px;top:883px;width:85px">84 452,83</div>
<div class="lbl" style="left:490px;top:884px">Сумма по факту, тара</div><div class="inp" style="left:706px;top:883px;width:85px"></div>
<div class="lbl" style="left:795px;top:884px">Сумма по остаткам, товар</div><div class="inp" style="left:1003px;top:883px;width:85px">84 505,89</div>
<div class="lbl" style="left:248px;top:911px">Сумма по остаткам, тара</div><div class="inp" style="left:401px;top:910px;width:85px"></div>
<div class="lbl" style="left:490px;top:911px">Сумма недостачи / излишка, товар</div><div class="inp" style="left:706px;top:910px;width:85px">53,06</div>
<div class="lbl" style="left:795px;top:911px">Сумма недостачи / излишка, тара</div><div class="inp" style="left:1003px;top:910px;width:85px"></div>
<div class="hl" style="left:244px;top:936px;width:1676px;background:#d0d0d0"></div>
<div class="btn" style="left:247px;top:942px;width:34px;height:23px"></div>
<div class="cb" style="left:258px;top:947px"></div>
<svg class="abs" viewBox="0 0 5 5" style="left:276px;top:960px;width:5px;height:5px"><path d="M5 0v5H0z" fill="#2f86c9"/></svg>
<div class="lbl" style="left:287px;top:943px">Включить корректировку на форме</div>
<div class="vl" style="left:1130px;top:467px;height:469px;background:#d0d0d0"></div>
<div class="tab act" style="left:1140px;top:470px;width:48px;height:24px;line-height:24px">SKU</div>
<div class="hl" style="left:1134px;top:493px;width:1786px;background:#c9c9c9"></div>
<div class="grid" style="left:1136px;top:498px;width:780px;height:405px">
<div class="gh" style="height:43px">
<div class="hc" style="left:0px;width:224px"><div style="top:12.5px;height:17px"><svg viewBox="0 0 14 14" style="width:15px;height:15px;vertical-align:-3px;margin-right:1px" fill="none"><circle cx="7" cy="7" r="5.7" stroke="#5cc4f1" stroke-width="1.8" fill="#e9f6fd"/><path d="M4.2 8.4L7 5.4l2.8 3" stroke="#6a6a6a" stroke-width="1.5" stroke-linecap="round" stroke-linejoin="round"/></svg>Наименование</div></div>
<div class="hc" style="left:224px;width:118px"><div style="top:12.5px;height:17px">Штрихкод</div></div>
<div class="hc" style="left:342px;width:82px"><div style="top:5.0px;height:17px">Кол-во по</div><div style="top:22.0px;height:17px">описям</div></div>
<div class="hc" style="left:424px;width:83px"><div style="top:5.0px;height:17px">Кол-во по</div><div style="top:22.0px;height:17px">остаткам</div></div>
<div class="hc" style="left:507px;width:82px"><div style="top:1px;height:17px">Кол-во</div><div style="top:18px;height:17px">недостачи /</div><div style="top:35px;height:17px">излишка</div></div>
<div class="hc" style="left:589px;width:83px"><div style="top:5.0px;height:17px">Цена по</div><div style="top:22.0px;height:17px">описям</div></div>
<div class="hc" style="left:672px;width:82px"><div style="top:5.0px;height:17px">Цена по</div><div style="top:22.0px;height:17px">остаткам</div></div>
<div class="hc" style="left:754px;width:83px"><div style="top:5.0px;height:17px">Сумма по</div><div style="top:22.0px;height:17px">описям</div></div>
</div>
<div class="abs" style="left:0;right:0;top:43.80px;height:1px;background:#e6e6e6"></div>
<div class="row" style="top:44.8px;height:21.94px">
<div class="c" style="left:0px;width:224px;letter-spacing:-0.36px"><i>КРУПА МАННАЯ ЭКОЛАЙН 900Г ЭКО</i></div>
<div class="c" style="left:224px;width:118px"><i>4811180000065</i></div>
<div class="c r" style="left:342px;width:82px"><i>16</i></div>
<div class="c r" style="left:424px;width:83px"><i>16</i></div>
<div class="c r" style="left:507px;width:82px"><i></i></div>
<div class="c r" style="left:589px;width:83px"><i>1,69</i></div>
<div class="c r" style="left:672px;width:82px"><i>1,69</i></div>
<div class="c r" style="left:754px;width:83px"><i></i></div>
</div>
<div class="row" style="top:66.74px;height:21.94px">
<div class="c" style="left:0px;width:224px;letter-spacing:-0.36px"><i>КРУПА ПЕРЛОВАЯ №1 ФАС. РБ 1КГ С</i></div>
<div class="c" style="left:224px;width:118px"><i>4810047001634</i></div>
<div class="c r" style="left:342px;width:82px"><i>4</i></div>
<div class="c r" style="left:424px;width:83px"><i>4</i></div>
<div class="c r" style="left:507px;width:82px"><i></i></div>
<div class="c r" style="left:589px;width:83px"><i>0,95</i></div>
<div class="c r" style="left:672px;width:82px"><i>0,95</i></div>
<div class="c r" style="left:754px;width:83px"><i></i></div>
</div>
<div class="row" style="top:88.68px;height:21.94px">
<div class="c" style="left:0px;width:224px;letter-spacing:-0.36px"><i>КРУПА ПШЕНО СУПЕР! ШЛИФ 800Г С</i></div>
<div class="c" style="left:224px;width:118px"><i>4811180005725</i></div>
<div class="c r" style="left:342px;width:82px"><i>10</i></div>
<div class="c r" style="left:424px;width:83px"><i>10</i></div>
<div class="c r" style="left:507px;width:82px"><i></i></div>
<div class="c r" style="left:589px;width:83px"><i>1,15</i></div>
<div class="c r" style="left:672px;width:82px"><i>1,15</i></div>
<div class="c r" style="left:754px;width:83px"><i></i></div>
</div>
<div class="row" style="top:110.62px;height:21.94px">
<div class="c" style="left:0px;width:224px;letter-spacing:-0.36px"><i>КРУПА ПШЕНО ЭКОЛАЙН 0.9КГ ЭКО</i></div>
<div class="c" style="left:224px;width:118px"><i>4811180000089</i></div>
<div class="c r" style="left:342px;width:82px"><i>5</i></div>
<div class="c r" style="left:424px;width:83px"><i>5</i></div>
<div class="c r" style="left:507px;width:82px"><i></i></div>
<div class="c r" style="left:589px;width:83px"><i>1,59</i></div>
<div class="c r" style="left:672px;width:82px"><i>1,59</i></div>
<div class="c r" style="left:754px;width:83px"><i></i></div>
</div>
<div class="row sel" style="top:132.56px;height:21.94px">
<div class="c" style="left:0px;width:224px;letter-spacing:-0.36px"><i>КРУПА РИС МЕЛЬКРУП КРУГЛОЗЕРНЫЙ</i></div>
<div class="c" style="left:224px;width:118px"><i>4620009761137</i></div>
<div class="c r" style="left:342px;width:82px"><i>9</i></div>
<div class="c r" style="left:424px;width:83px"><i>9</i></div>
<div class="c r" style="left:507px;width:82px"><i></i></div>
<div class="c r" style="left:589px;width:83px"><i>1,65</i></div>
<div class="c r" style="left:672px;width:82px"><i>1,65</i></div>
<div class="c r" style="left:754px;width:83px"><i></i></div>
</div>
<div class="row" style="top:154.5px;height:21.94px">
<div class="c" style="left:0px;width:224px;letter-spacing:-0.36px"><i>КРУПА РИС ПРОПАРЕНЫЙ ФАС. ИНД</i></div>
<div class="c" style="left:224px;width:118px"><i>4810047002594</i></div>
<div class="c r" style="left:342px;width:82px"><i>18</i></div>
<div class="c r" style="left:424px;width:83px"><i>18</i></div>
<div class="c r" style="left:507px;width:82px"><i></i></div>
<div class="c r" style="left:589px;width:83px"><i>2,59</i></div>
<div class="c r" style="left:672px;width:82px"><i>2,59</i></div>
<div class="c r" style="left:754px;width:83px"><i></i></div>
</div>
<div class="row" style="top:176.44px;height:21.94px">
<div class="c" style="left:0px;width:224px;letter-spacing:-0.36px"><i>КРУПА РИС СУПЕР! ДЛИННОЗЕРН.1С</i></div>
<div class="c" style="left:224px;width:118px"><i>4811180004667</i></div>
<div class="c r" style="left:342px;width:82px"><i>20</i></div>
<div class="c r" style="left:424px;width:83px"><i>20</i></div>
<div class="c r" style="left:507px;width:82px"><i></i></div>
<div class="c r" style="left:589px;width:83px"><i>1,65</i></div>
<div class="c r" style="left:672px;width:82px"><i>1,65</i></div>
<div class="c r" style="left:754px;width:83px"><i></i></div>
</div>
<div class="row" style="top:198.38px;height:21.94px">
<div class="c" style="left:0px;width:224px;letter-spacing:-0.36px"><i>КРУПА РИС СУПЕР! КРУГЛЫЙ ШЛИФ</i></div>
<div class="c" style="left:224px;width:118px"><i>4811180005763</i></div>
<div class="c r" style="left:342px;width:82px"><i>22</i></div>
<div class="c r" style="left:424px;width:83px"><i>22</i></div>
<div class="c r" style="left:507px;width:82px"><i></i></div>
<div class="c r" style="left:589px;width:83px"><i>1,09</i></div>
<div class="c r" style="left:672px;width:82px"><i>1,09</i></div>
<div class="c r" style="left:754px;width:83px"><i></i></div>
</div>
<div class="row" style="top:220.32px;height:21.94px">
<div class="c" style="left:0px;width:224px;letter-spacing:-0.36px"><i>КРУПА РИС СУПЕР! ПРОПАР.1С 800Г</i></div>
<div class="c" style="left:224px;width:118px"><i>4811180004674</i></div>
<div class="c r" style="left:342px;width:82px"><i>24</i></div>
<div class="c r" style="left:424px;width:83px"><i>24</i></div>
<div class="c r" style="left:507px;width:82px"><i></i></div>
<div class="c r" style="left:589px;width:83px"><i>1,75</i></div>
<div class="c r" style="left:672px;width:82px"><i>1,75</i></div>
<div class="c r" style="left:754px;width:83px"><i></i></div>
</div>
<div class="row" style="top:242.26px;height:21.94px">
<div class="c" style="left:0px;width:224px;letter-spacing:-0.36px"><i>КРУПА РИС ЭКОЛАЙН КРАСНОДАРС</i></div>
<div class="c" style="left:224px;width:118px"><i>4811180000102</i></div>
<div class="c r" style="left:342px;width:82px"><i>24</i></div>
<div class="c r" style="left:424px;width:83px"><i>24</i></div>
<div class="c r" style="left:507px;width:82px"><i></i></div>
<div class="c r" style="left:589px;width:83px"><i>2,29</i></div>
<div class="c r" style="left:672px;width:82px"><i>2,29</i></div>
<div class="c r" style="left:754px;width:83px"><i></i></div>
</div>
<div class="row" style="top:264.2px;height:21.94px">
<div class="c" style="left:0px;width:224px;letter-spacing:-0.36px"><i>КРУПА РИС ЭКОЛАЙН СЕМЕЙНЫЙ 9</i></div>
<div class="c" style="left:224px;width:118px"><i>4811180000126</i></div>
<div class="c r" style="left:342px;width:82px"><i>10</i></div>
<div class="c r" style="left:424px;width:83px"><i>10</i></div>
<div class="c r" style="left:507px;width:82px"><i></i></div>
<div class="c r" style="left:589px;width:83px"><i>2,29</i></div>
<div class="c r" style="left:672px;width:82px"><i>2,29</i></div>
<div class="c r" style="left:754px;width:83px"><i></i></div>
</div>
<div class="row" style="top:286.14px;height:21.94px">
<div class="c" style="left:0px;width:224px;letter-spacing:-0.36px"><i>КРУПА РИС ЭКОЛАЙН ЯНТАРНЫЙ 9</i></div>
<div class="c" style="left:224px;width:118px"><i>4811180000140</i></div>
<div class="c r" style="left:342px;width:82px"><i>20</i></div>
<div class="c r" style="left:424px;width:83px"><i>20</i></div>
<div class="c r" style="left:507px;width:82px"><i></i></div>
<div class="c r" style="left:589px;width:83px"><i>2,39</i></div>
<div class="c r" style="left:672px;width:82px"><i>2,39</i></div>
<div class="c r" style="left:754px;width:83px"><i></i></div>
</div>
<div class="row" style="top:308.08px;height:21.94px">
<div class="c" style="left:0px;width:224px;letter-spacing:-0.36px"><i>КРУПА ЯЧМЕННАЯ СУПЕР! ПЕРЛОВА</i></div>
<div class="c" style="left:224px;width:118px"><i>4811180005701</i></div>
<div class="c r" style="left:342px;width:82px"><i>22</i></div>
<div class="c r" style="left:424px;width:83px"><i>22</i></div>
<div class="c r" style="left:507px;width:82px"><i></i></div>
<div class="c r" style="left:589px;width:83px"><i>0,65</i></div>
<div class="c r" style="left:672px;width:82px"><i>0,65</i></div>
<div class="c r" style="left:754px;width:83px"><i></i></div>
</div>
<div class="row" style="top:330.02px;height:21.94px">
<div class="c" style="left:0px;width:224px;letter-spacing:-0.36px"><i>КРЫЛЫШКИ СТОЛ.ЛЮКС К/В В/У 1КГ</i></div>
<div class="c" style="left:224px;width:118px"><i>14130</i></div>
<div class="c r" style="left:342px;width:82px"><i>1,153</i></div>
<div class="c r" style="left:424px;width:83px"><i>1,153</i></div>
<div class="c r" style="left:507px;width:82px"><i></i></div>
<div class="c r" style="left:589px;width:83px"><i>7,45</i></div>
<div class="c r" style="left:672px;width:82px"><i>7,45</i></div>
<div class="c r" style="left:754px;width:83px"><i></i></div>
</div>
<div class="row" style="top:351.96px;height:21.94px">
<div class="c" style="left:0px;width:224px;letter-spacing:-0.36px"><i>КУБИКИ СОЕВЫЕ ГУЛЯШ 100Г ЗДОРО</i></div>
<div class="c" style="left:224px;width:118px"><i>4811346000731</i></div>
<div class="c r" style="left:342px;width:82px"><i>8</i></div>
<div class="c r" style="left:424px;width:83px"><i>8</i></div>
<div class="c r" style="left:507px;width:82px"><i></i></div>
<div class="c r" style="left:589px;width:83px"><i>0,99</i></div>
<div class="c r" style="left:672px;width:82px"><i>0,99</i></div>
<div class="c r" style="left:754px;width:83px"><i></i></div>
</div>
<div class="row" style="top:373.9px;height:21.94px">
<div class="c" style="left:0px;width:224px;letter-spacing:-0.36px"><i>КУКУРУЗА КОНС.СЛАДКАЯ ГЛОБУС 3</i></div>
<div class="c" style="left:224px;width:118px"><i>5998304241111</i></div>
<div class="c r" style="left:342px;width:82px"><i>8</i></div>
<div class="c r" style="left:424px;width:83px"><i>8</i></div>
<div class="c r" style="left:507px;width:82px"><i></i></div>
<div class="c r" style="left:589px;width:83px"><i>2,09</i></div>
<div class="c r" style="left:672px;width:82px"><i>2,09</i></div>
<div class="c r" style="left:754px;width:83px"><i></i></div>
</div>
<div class="abs" style="left:770px;top:43px;width:9px;height:360px;background:#fff"></div><div class="sb" style="left:771px;top:189px;width:7px;height:114px"></div><div class="abs" style="left:0;top:395px;width:779px;height:8px;background:#f4f4f4"></div><div class="sb" style="left:1px;top:395px;width:591px;height:8px"></div>
</div>
<div class="tb act" style="left:1136px;top:908px"><svg viewBox="0 0 22 22" fill="none" stroke="#4d4d4d" stroke-width="1.4" stroke-linecap="round" stroke-linejoin="round"><circle cx="4" cy="5.3" r="1.6" stroke="#5cc4f1"/><circle cx="4" cy="11" r="1.6" stroke="#5cc4f1"/><circle cx="4" cy="16.7" r="1.6" stroke="#5cc4f1"/><path d="M9.4 5.3h8.6M9.4 11h8.6M9.4 16.7h8.6" stroke-width="1.8" stroke="#3c3c3c"/></svg></div>
<div class="tb" style="left:1164px;top:908px"><svg viewBox="0 0 22 22" fill="none" stroke="#4d4d4d" stroke-width="1.4" stroke-linecap="round" stroke-linejoin="round"><rect x="2.4" y="2.4" width="17.2" height="17.2" fill="#f7f7f7" stroke="none"/><path d="M8 2.6v17M14 2.6v17M2.6 8h17M2.6 14h17" stroke="#5cc4f1"/><rect x="2.4" y="2.4" width="17.2" height="17.2" rx="1" stroke-width="1.6" stroke="#2c2c2c"/></svg></div>
<div class="tb" style="left:1198px;top:908px"><svg viewBox="0 0 22 22" fill="none" stroke="#4d4d4d" stroke-width="1.4" stroke-linecap="round" stroke-linejoin="round"><path d="M2.6 4.6h16.8" stroke-width="1.6"/><path d="M5.6 9.2h10.8" stroke="#5cc4f1" stroke-width="1.6"/><path d="M8 13.8h6" stroke-width="1.6"/><path d="M9.8 18.4h2.4" stroke="#5cc4f1" stroke-width="1.6"/></svg></div>
<div class="tb" style="left:1232px;top:908px"><svg viewBox="0 0 22 22" fill="none" stroke="#4d4d4d" stroke-width="1.4" stroke-linecap="round" stroke-linejoin="round"><path d="M9.21 2.59L12.79 2.59L13.04 5.14L15.05 6.31L17.39 5.25L19.18 8.34L17.09 9.84L17.09 12.16L19.18 13.66L17.39 16.75L15.05 15.69L13.04 16.86L12.79 19.41L9.21 19.41L8.96 16.86L6.95 15.69L4.61 16.75L2.82 13.66L4.91 12.16L4.91 9.84L2.82 8.34L4.61 5.25L6.95 6.31L8.96 5.14z" stroke-width="1.6" stroke="#444"/><circle cx="11" cy="11" r="2.6" stroke="#5cc4f1" stroke-width="1.6"/></svg></div>
<div class="tb" style="left:1266px;top:908px"><svg viewBox="0 0 22 22" fill="none" stroke="#4d4d4d" stroke-width="1.4" stroke-linecap="round" stroke-linejoin="round"><g font-family="Liberation Sans, sans-serif" font-size="6" font-weight="bold" fill="#5cc4f1" stroke="none" text-anchor="middle"><text x="3.6" y="6.6">1</text><text x="3.6" y="13.2">2</text><text x="3.6" y="19.8">3</text></g><path d="M8.6 4.6h10M8.6 11.4h10M8.6 18.2h10" stroke-width="1.6" stroke="#3c3c3c"/></svg></div>
<div class="tb" style="left:1294px;top:908px"><svg viewBox="0 0 22 22" fill="none" stroke="#4d4d4d" stroke-width="1.4" stroke-linecap="round" stroke-linejoin="round"><path d="M2.4 4h17.2M2.4 8.6h17.2M2.4 13.2h8.6M2.4 17.8h8.6" stroke-width="1.6"/><path d="M16 12.6v6.4M12.8 15.8h6.4" stroke="#5cc4f1" stroke-width="1.6"/></svg></div>
<div class="tb" style="left:1328px;top:908px"><svg viewBox="0 0 22 22" fill="none" stroke="#4d4d4d" stroke-width="1.4" stroke-linecap="round" stroke-linejoin="round"><path d="M10.4 5H4.2a1.4 1.4 0 0 0-1.4 1.4v11.6a1.4 1.4 0 0 0 1.4 1.4h11.6a1.4 1.4 0 0 0 1.4-1.4v-6.4" stroke-width="1.6"/><path d="M10.2 12L19.4 2.8M13.6 2.6h6v6" stroke="#5cc4f1" stroke-width="1.5"/></svg></div>
<div class="tb" style="left:1362px;top:908px"><svg viewBox="0 0 22 22" fill="none" stroke="#4d4d4d" stroke-width="1.4" stroke-linecap="round" stroke-linejoin="round"><path d="M5 16.3H2.4V5.7H13.4M10.4 2.5l3.6 3.2-3.6 3.2" stroke="#2c2c2c" stroke-width="1.6"/><path d="M17.2 5.7h2.3v10.6H8.4M11.6 13.1l-3.6 3.2 3.6 3.2" stroke="#5cc4f1" stroke-width="1.6"/></svg></div>
<div class="sep" style="left:1193px;top:908px"></div>
<div class="sep" style="left:1227px;top:908px"></div>
<div class="sep" style="left:1261px;top:908px"></div>
<div class="sep" style="left:1323px;top:908px"></div>
<div class="sep" style="left:1357px;top:908px"></div>
<div class="btn" style="left:1456px;top:942px;width:51px"><svg viewBox="0 0 16 16" style="width:16px;height:16px;vertical-align:-3px" fill="none" stroke-width="1.5" stroke-linecap="round" stroke-linejoin="round"><path d="M2.4 7a5.6 5.6 0 0 1 10-2.6M12.8 1.6v3h-3" stroke="#4d4d4d"/><path d="M13.6 9a5.6 5.6 0 0 1-10 2.6M3.2 14.4v-3h3" stroke="#5cc4f1"/></svg></div>
<div class="btn dis" style="left:1511px;top:942px;width:114px"><svg viewBox="0 0 14 14" style="width:13px;height:13px;vertical-align:-2px;margin-right:1px" fill="none" stroke="#4d4d4d" stroke-width="1.4" stroke-linejoin="round"><path d="M1.6 1.6h8.6l2.2 2.2v8.6H1.6z"/><path d="M3.8 12.2V8.2h6.4v4" fill="#4d4d4d"/></svg>Сохранить</div>
<div class="btn dis" style="left:1630px;top:942px;width:109px"><svg viewBox="0 0 14 14" style="width:14.5px;height:14.5px;vertical-align:-2px;margin-right:2px" fill="none" stroke="#4d4d4d" stroke-width="1.5" stroke-linecap="round" stroke-linejoin="round"><path d="M1.8 3.4h10.4M5 3.2V1.6h4v1.6M3.2 3.6l.6 9h6.4l.6-9"/></svg>Отменить</div>
<div class="btn" style="left:1743px;top:942px;width:68px"><svg viewBox="0 0 14 14" style="width:14px;height:14px;vertical-align:-2px;margin-right:2px" fill="none" stroke="#4d4d4d" stroke-width="1.5" stroke-linecap="round" stroke-linejoin="round"><path d="M1.4 7.6l3.8 4L12.8 2.4"/></svg>OK</div>
<div class="btn" style="left:1816px;top:942px;width:100px"><svg viewBox="0 0 14 14" style="width:13px;height:13px;vertical-align:-2px;margin-right:3px" fill="none" stroke="#4d4d4d" stroke-width="1.5" stroke-linecap="round"><path d="M2 2l10 10M12 2L2 12"/></svg>Закрыть</div>
</body></html>
